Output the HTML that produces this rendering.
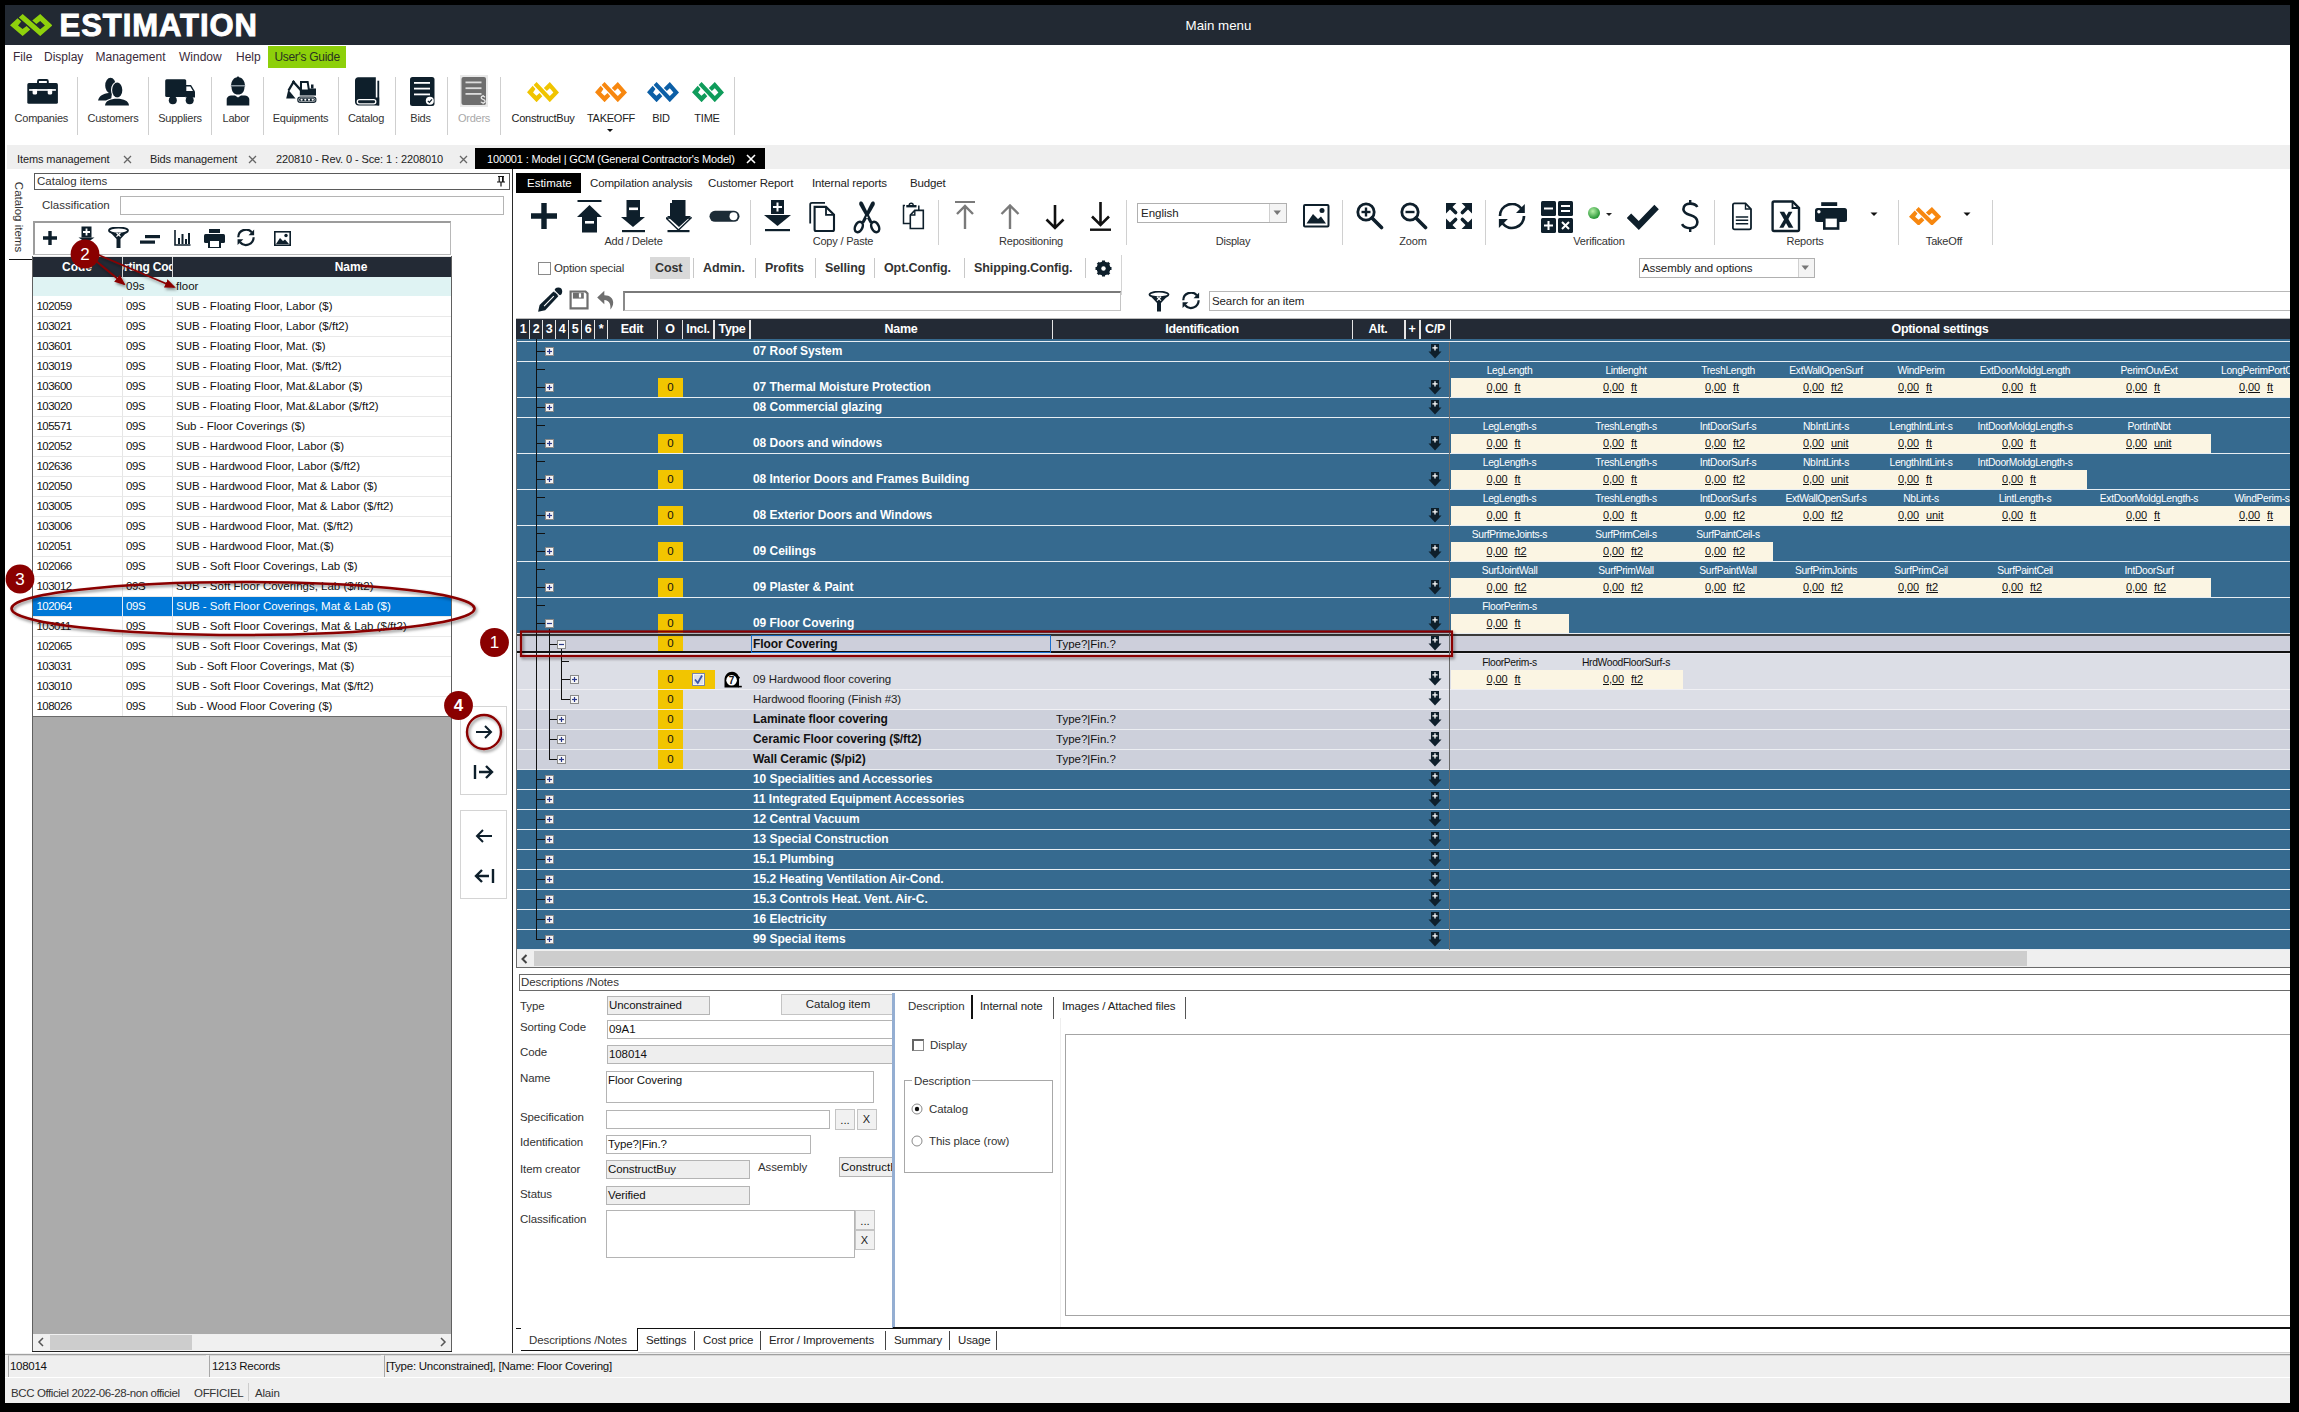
<!DOCTYPE html><html><head><meta charset="utf-8"><style>
html,body{margin:0;padding:0;}
body{width:2299px;height:1412px;background:#000;position:relative;overflow:hidden;font-family:"Liberation Sans", sans-serif;}
body div, body svg{position:absolute;box-sizing:border-box;white-space:nowrap;}
</style></head><body><div style="left:5px;top:5px;width:2285px;height:1398px;background:#fff;"></div>
<div style="left:5px;top:5px;width:2285px;height:40px;background:#222933;"></div>
<svg style="left:9.73px;top:13.96px;" width="42.42" height="22.06" viewBox="0 0 42.42 22.06"><g transform="scale(1.0000,1.0000)"><path d="M0,11.31 L7.58,4.18 L11.2,7.58 L8.03,11.42 L12.56,15.04 L16.63,12.1 L20.25,15.5 L12.67,22.06 Z" fill="#8fd10c"/><path d="M12.67,0 L8.83,3.39 L30.21,22.06 L42.42,11.42 L30.21,0 L22.29,6.56 L26.36,9.95 L30.21,6.9 L34.96,11.42 L30.21,15.27 Z" fill="#8fd10c"/></g></svg>
<div style="left:59.5px;top:8.8px;height:34px;line-height:34px;font-size:31px;color:#fff;font-weight:bold;letter-spacing:0.95px;-webkit-text-stroke:0.9px #fff;">ESTIMATION</div>
<div style="left:1118.5px;top:16.5px;height:17px;line-height:17px;font-size:13.3px;color:#fff;width:200px;text-align:center;">Main menu</div>
<div style="left:268px;top:46px;width:78px;height:22px;background:#8dd00a;"></div>
<div style="left:13px;top:49.0px;height:16px;line-height:16px;font-size:12px;color:#3a2a3a;letter-spacing:0px;">File</div>
<div style="left:44px;top:49.0px;height:16px;line-height:16px;font-size:12px;color:#3a2a3a;letter-spacing:0px;">Display</div>
<div style="left:95.5px;top:49.0px;height:16px;line-height:16px;font-size:12px;color:#3a2a3a;letter-spacing:0px;">Management</div>
<div style="left:179px;top:49.0px;height:16px;line-height:16px;font-size:12px;color:#3a2a3a;letter-spacing:0px;">Window</div>
<div style="left:236px;top:49.0px;height:16px;line-height:16px;font-size:12px;color:#3a2a3a;letter-spacing:0px;">Help</div>
<div style="left:274.4px;top:49.0px;height:16px;line-height:16px;font-size:12px;color:#2a3320;letter-spacing:-0.3px;">User&#x27;s Guide</div>
<div style="left:77px;top:77px;width:1px;height:58px;background:#cfcfcf;"></div>
<div style="left:148px;top:77px;width:1px;height:58px;background:#cfcfcf;"></div>
<div style="left:211px;top:77px;width:1px;height:58px;background:#cfcfcf;"></div>
<div style="left:263px;top:77px;width:1px;height:58px;background:#cfcfcf;"></div>
<div style="left:338px;top:77px;width:1px;height:58px;background:#cfcfcf;"></div>
<div style="left:395px;top:77px;width:1px;height:58px;background:#cfcfcf;"></div>
<div style="left:447px;top:77px;width:1px;height:58px;background:#cfcfcf;"></div>
<div style="left:500px;top:77px;width:1px;height:58px;background:#cfcfcf;"></div>
<div style="left:734px;top:77px;width:1px;height:58px;background:#cfcfcf;"></div>
<svg style="left:27px;top:76px;" width="32" height="30" viewBox="0 0 32 30"><rect x="11" y="4" width="9.8" height="5" rx="1.2" fill="none" stroke="#0e1f2b" stroke-width="1.9"/>
<rect x="0.3" y="7.1" width="30.6" height="20.7" rx="1.6" fill="#0e1f2b"/>
<rect x="2.1" y="13.1" width="26.8" height="1.7" fill="#fff"/>
<path d="M5.6,13.1 L10.1,13.1 L10.1,17 C10.1,18 9.3,18.5 7.85,18.5 C6.4,18.5 5.6,18 5.6,17 Z M20.7,13.1 L25.2,13.1 L25.2,17 C25.2,18 24.4,18.5 22.95,18.5 C21.5,18.5 20.7,18 20.7,17 Z" fill="#fff"/></svg>
<svg style="left:97px;top:76px;" width="34" height="30" viewBox="0 0 34 30"><ellipse cx="13.5" cy="9.5" rx="5.3" ry="7.8" fill="#0e1f2b"/>
<path d="M1,24.5 C2,20 6,17.5 12,17 L15,17 L14,24.5 Z" fill="#0e1f2b"/>
<ellipse cx="20.2" cy="14" rx="6.2" ry="8.6" fill="#fff"/>
<ellipse cx="20.2" cy="14" rx="5.1" ry="7.6" fill="#0e1f2b"/>
<path d="M6.5,30 C7,24.5 12,21.8 20,21.8 C28,21.8 32.5,24.5 33,30 Z" fill="#fff"/>
<path d="M8,29.5 C8.5,25 13,22.8 20,22.8 C27,22.8 31.5,25 32,29.5 Z" fill="#0e1f2b"/></svg>
<svg style="left:164px;top:76px;" width="32" height="30" viewBox="0 0 32 30"><rect x="1.2" y="3.3" width="21" height="17.8" rx="1.5" fill="#0e1f2b"/>
<path d="M21.5,9 L27,9 L31,15.5 L31,21.6 L21.5,21.6 Z" fill="#0e1f2b"/>
<path d="M22.3,10.6 L26.3,10.6 L29,15 L22.3,15 Z" fill="#fff"/>
<circle cx="8.8" cy="24.2" r="4" fill="#0e1f2b"/><circle cx="25.7" cy="24.2" r="4" fill="#0e1f2b"/></svg>
<svg style="left:225px;top:76px;" width="26" height="30" viewBox="0 0 26 30"><path d="M6,10.5 C6,4.5 9,1.2 13,1.2 C17,1.2 20,4.5 20,10.5 Z" fill="#0e1f2b"/>
<rect x="11.8" y="0.5" width="2.4" height="4" rx="1" fill="#0e1f2b"/>
<rect x="5.8" y="9" width="14.4" height="1.6" fill="#8d99a3"/>
<path d="M6.5,10.6 L19.5,10.6 C19.5,16 17,18.6 13,18.6 C9,18.6 6.5,16 6.5,10.6 Z" fill="#0e1f2b"/>
<path d="M1.7,29.5 L1.7,23.5 C1.7,21 4,19.5 7,19.5 L10,19.5 L13,21.5 L16,19.5 L19,19.5 C22,19.5 24.3,21 24.3,23.5 L24.3,29.5 Z" fill="#0e1f2b"/></svg>
<svg style="left:285px;top:76px;" width="34" height="30" viewBox="0 0 34 30"><path d="M1.2,22.6 L3.3,13.7 L10.6,22.6 Z" fill="#0e1f2b"/>
<path d="M3.5,14.5 L8.5,6 L17,15.5" fill="none" stroke="#0e1f2b" stroke-width="2.3"/>
<circle cx="8.5" cy="6" r="1.5" fill="#0e1f2b"/>
<path d="M15,5 L23.5,5 L24.7,12.5 L31,12.5 L31,19.5 L14.8,19.5 Z" fill="#0e1f2b"/>
<path d="M17,7 L21.8,7 L22.8,13.5 L17,13.5 Z" fill="#fff"/>
<rect x="26" y="8.5" width="2.5" height="4" fill="#0e1f2b"/>
<rect x="12.2" y="20.5" width="19.3" height="6.5" rx="3.2" fill="#0e1f2b"/>
<rect x="13.6" y="21.9" width="16.5" height="3.7" rx="1.8" fill="none" stroke="#fff" stroke-width="0.6"/>
<circle cx="16.6" cy="23.75" r="1.1" fill="#fff"/><circle cx="20.3" cy="23.75" r="1.1" fill="#fff"/><circle cx="24" cy="23.75" r="1.1" fill="#fff"/><circle cx="27.7" cy="23.75" r="1.1" fill="#fff"/></svg>
<svg style="left:353px;top:76px;" width="28" height="31" viewBox="0 0 28 31"><path d="M2,4.5 C2,2.5 3.3,1.2 5.2,1.2 L22.8,1.2 L22.8,23 L2,23 Z" fill="#0e1f2b"/>
<rect x="24.4" y="4.7" width="1.8" height="24.7" fill="#0e1f2b"/>
<path d="M2,21.5 L2,26 C2,28 3.5,29.4 5.5,29.4 L26.2,29.4 L26.2,21.5 Z" fill="#0e1f2b"/>
<rect x="4.3" y="23.6" width="18.5" height="4.2" rx="2.1" fill="none" stroke="#fff" stroke-width="1.3"/></svg>
<svg style="left:409px;top:76px;" width="27" height="31" viewBox="0 0 27 31"><rect x="1" y="1" width="24.5" height="29" rx="2.5" fill="#0e1f2b"/>
<rect x="5" y="6" width="16" height="1.8" fill="#fff"/><rect x="5" y="11.7" width="16" height="1.8" fill="#fff"/><rect x="5" y="17.5" width="16" height="1.8" fill="#fff"/>
<circle cx="20.8" cy="24.8" r="4" fill="#fff"/><path d="M18.8,24.9 L20.4,26.4 L23,23.4" stroke="#0e1f2b" stroke-width="1.3" fill="none"/></svg>
<svg style="left:460px;top:75px;" width="28" height="32" viewBox="0 0 28 32"><rect x="0" y="0" width="28" height="32" fill="#e9e9e9"/>
<rect x="1.5" y="2" width="24.5" height="28" rx="2" fill="#6e6e6e"/>
<rect x="5.5" y="6.5" width="16" height="1.8" fill="#dcdcdc"/><rect x="5.5" y="12.3" width="16" height="1.8" fill="#dcdcdc"/><rect x="5.5" y="18" width="16" height="1.8" fill="#dcdcdc"/>
<path d="M25,22.4 C24.6,21.6 23.8,21.2 23,21.2 C21.9,21.2 21.2,21.8 21.2,22.7 C21.2,23.7 22.1,24 23,24.3 C24,24.6 25.1,25 25.1,26.2 C25.1,27.2 24.3,27.8 23.1,27.8 C22.1,27.8 21.3,27.4 20.9,26.7 M23.1,20 L23.1,21.2 M23.1,27.8 L23.1,29.2" fill="none" stroke="#e6e6e6" stroke-width="1.3"/></svg>
<svg style="left:527px;top:81.8px;" width="32" height="20.2" viewBox="0 0 32 20.2"><g transform="scale(0.7544,0.9157)"><path d="M0,11.31 L7.58,4.18 L11.2,7.58 L8.03,11.42 L12.56,15.04 L16.63,12.1 L20.25,15.5 L12.67,22.06 Z" fill="#f0c400"/><path d="M12.67,0 L8.83,3.39 L30.21,22.06 L42.42,11.42 L30.21,0 L22.29,6.56 L26.36,9.95 L30.21,6.9 L34.96,11.42 L30.21,15.27 Z" fill="#f0c400"/></g></svg>
<svg style="left:595px;top:81.8px;" width="32" height="20.2" viewBox="0 0 32 20.2"><g transform="scale(0.7544,0.9157)"><path d="M0,11.31 L7.58,4.18 L11.2,7.58 L8.03,11.42 L12.56,15.04 L16.63,12.1 L20.25,15.5 L12.67,22.06 Z" fill="#f7870f"/><path d="M12.67,0 L8.83,3.39 L30.21,22.06 L42.42,11.42 L30.21,0 L22.29,6.56 L26.36,9.95 L30.21,6.9 L34.96,11.42 L30.21,15.27 Z" fill="#f7870f"/></g></svg>
<svg style="left:647px;top:81.8px;" width="32" height="20.2" viewBox="0 0 32 20.2"><g transform="scale(0.7544,0.9157)"><path d="M0,11.31 L7.58,4.18 L11.2,7.58 L8.03,11.42 L12.56,15.04 L16.63,12.1 L20.25,15.5 L12.67,22.06 Z" fill="#0c5fa6"/><path d="M12.67,0 L8.83,3.39 L30.21,22.06 L42.42,11.42 L30.21,0 L22.29,6.56 L26.36,9.95 L30.21,6.9 L34.96,11.42 L30.21,15.27 Z" fill="#0c5fa6"/></g></svg>
<svg style="left:692px;top:81.8px;" width="32" height="20.2" viewBox="0 0 32 20.2"><g transform="scale(0.7544,0.9157)"><path d="M0,11.31 L7.58,4.18 L11.2,7.58 L8.03,11.42 L12.56,15.04 L16.63,12.1 L20.25,15.5 L12.67,22.06 Z" fill="#0f9c5b"/><path d="M12.67,0 L8.83,3.39 L30.21,22.06 L42.42,11.42 L30.21,0 L22.29,6.56 L26.36,9.95 L30.21,6.9 L34.96,11.42 L30.21,15.27 Z" fill="#0f9c5b"/></g></svg>
<div style="left:-18.700000000000003px;top:111.0px;height:14px;line-height:14px;font-size:11px;color:#333;width:120px;text-align:center;letter-spacing:-0.25px;">Companies</div>
<div style="left:53.0px;top:111.0px;height:14px;line-height:14px;font-size:11px;color:#333;width:120px;text-align:center;letter-spacing:-0.25px;">Customers</div>
<div style="left:120.0px;top:111.0px;height:14px;line-height:14px;font-size:11px;color:#333;width:120px;text-align:center;letter-spacing:-0.25px;">Suppliers</div>
<div style="left:176.0px;top:111.0px;height:14px;line-height:14px;font-size:11px;color:#333;width:120px;text-align:center;letter-spacing:-0.25px;">Labor</div>
<div style="left:240.5px;top:111.0px;height:14px;line-height:14px;font-size:11px;color:#333;width:120px;text-align:center;letter-spacing:-0.25px;">Equipments</div>
<div style="left:306.0px;top:111.0px;height:14px;line-height:14px;font-size:11px;color:#333;width:120px;text-align:center;letter-spacing:-0.25px;">Catalog</div>
<div style="left:360.5px;top:111.0px;height:14px;line-height:14px;font-size:11px;color:#333;width:120px;text-align:center;letter-spacing:-0.25px;">Bids</div>
<div style="left:414.0px;top:111.0px;height:14px;line-height:14px;font-size:11px;color:#a9a9a9;width:120px;text-align:center;letter-spacing:-0.25px;">Orders</div>
<div style="left:483.0px;top:111.0px;height:14px;line-height:14px;font-size:11px;color:#222;width:120px;text-align:center;letter-spacing:-0.25px;">ConstructBuy</div>
<div style="left:551.0px;top:111.0px;height:14px;line-height:14px;font-size:11px;color:#222;width:120px;text-align:center;letter-spacing:-0.25px;">TAKEOFF</div>
<div style="left:601.0px;top:111.0px;height:14px;line-height:14px;font-size:11px;color:#222;width:120px;text-align:center;letter-spacing:-0.25px;">BID</div>
<div style="left:647.0px;top:111.0px;height:14px;line-height:14px;font-size:11px;color:#222;width:120px;text-align:center;letter-spacing:-0.25px;">TIME</div>
<svg style="left:606px;top:128px;" width="8" height="5" viewBox="0 0 8 5"><path d="M1,1 L7,1 L4,4 Z" fill="#111"/></svg>
<div style="left:7px;top:145px;width:2283px;height:24px;background:#efefef;"></div>
<div style="left:475px;top:148px;width:290px;height:21px;background:#000;"></div>
<div style="left:17px;top:152.0px;height:14px;line-height:14px;font-size:11px;color:#222;letter-spacing:-0.1px;">Items management</div>
<svg style="left:122.5px;top:154.5px;" width="9" height="9" viewBox="0 0 9 9"><path d="M1,1 L8,8 M8,1 L1,8" stroke="#666" stroke-width="1.3"/></svg>
<div style="left:150px;top:152.0px;height:14px;line-height:14px;font-size:11px;color:#222;letter-spacing:-0.1px;">Bids management</div>
<svg style="left:247.5px;top:154.5px;" width="9" height="9" viewBox="0 0 9 9"><path d="M1,1 L8,8 M8,1 L1,8" stroke="#666" stroke-width="1.3"/></svg>
<div style="left:276px;top:152.0px;height:14px;line-height:14px;font-size:11px;color:#222;letter-spacing:-0.1px;">220810 - Rev. 0 - Sce: 1 : 2208010</div>
<svg style="left:458.5px;top:154.5px;" width="9" height="9" viewBox="0 0 9 9"><path d="M1,1 L8,8 M8,1 L1,8" stroke="#666" stroke-width="1.3"/></svg>
<div style="left:487px;top:152.0px;height:14px;line-height:14px;font-size:11px;color:#fff;letter-spacing:-0.15px;">100001 : Model | GCM (General Contractor&#x27;s Model)</div>
<svg style="left:746px;top:154px;" width="10" height="10" viewBox="0 0 10 10"><path d="M1,1 L9,9 M9,1 L1,9" stroke="#fff" stroke-width="1.6"/></svg>
<div style="left:512px;top:169px;width:1px;height:1184px;background:#2a2a2a;"></div>
<div style="left:5px;top:175px;width:27px;height:84px;"></div>
<div style="left:6px;top:211px;width:84px;height:20px;transform:rotate(90deg);transform-origin:center;font-size:11.5px;line-height:20px;color:#333;text-align:center;left:-23px;top:207px;">Catalog items</div>
<div style="left:9px;top:259px;width:24px;height:1px;background:#111;"></div>
<div style="left:34px;top:173px;width:476px;height:17px;border:1px solid #5a5a5a;background:#fff;"></div>
<div style="left:37px;top:174.0px;height:15px;line-height:15px;font-size:11.5px;color:#333;">Catalog items</div>
<svg style="left:496px;top:175px;" width="10" height="12" viewBox="0 0 10 12"><path d="M2,1.5 L8,1.5 M3.2,1.5 L3.2,7 M6.8,1.5 L6.8,7 M1,7 L9,7 M5,7 L5,11.5" stroke="#111" stroke-width="1.2" fill="none"/><rect x="6" y="2" width="1.6" height="5" fill="#111"/></svg>
<div style="left:42px;top:197.5px;height:15px;line-height:15px;font-size:11.5px;color:#333;">Classification</div>
<div style="left:120px;top:196px;width:384px;height:19px;border:1px solid #b4b4b4;background:#fff;"></div>
<div style="left:33px;top:221px;width:418px;height:34px;border:1px solid #b8b8b8;border-top:2px solid #9c9c9c;border-left:2px solid #9c9c9c;background:#fff;"></div>
<svg style="left:42px;top:230px;" width="16" height="16" viewBox="0 0 16 16"><path d="M8,1 L8,15 M1,8 L15,8" stroke="#0e1f2b" stroke-width="3.4"/></svg>
<svg style="left:78px;top:226px;" width="17" height="18" viewBox="0 0 17 18"><rect x="3.5" y="0.5" width="10" height="11" fill="#0e1f2b"/><path d="M8.5,2.5 L8.5,9.5 M5,6 L12,6" stroke="#fff" stroke-width="1.8"/><path d="M0.5,11.5 L16.5,11.5 L8.5,17 Z" fill="#0e1f2b"/></svg>
<svg style="left:108px;top:227px;" width="21" height="22" viewBox="0 0 21 22"><ellipse cx="10.5" cy="3.5" rx="9.5" ry="3" fill="none" stroke="#0e1f2b" stroke-width="1.8"/><path d="M1,4 L8.5,12 L8.5,21 L12.5,21 L12.5,12 L20,4 C17,7 4,7 1,4 Z" fill="#0e1f2b"/><path d="M8.5,5.8 L12.5,9.6 M12.5,5.8 L8.5,9.6" stroke="#fff" stroke-width="1.2"/></svg>
<svg style="left:140px;top:235px;" width="20" height="9" viewBox="0 0 20 9"><rect x="5" y="0" width="15" height="3.2" fill="#0e1f2b"/><rect x="0" y="5.5" width="15" height="3.2" fill="#0e1f2b"/></svg>
<svg style="left:174px;top:230px;" width="17" height="16" viewBox="0 0 17 16"><path d="M1,0 L1,15 L16.5,15" stroke="#0e1f2b" stroke-width="1.6" fill="none"/><rect x="4" y="8" width="2" height="6" fill="#0e1f2b"/><rect x="7.5" y="4" width="2" height="10" fill="#0e1f2b"/><rect x="11" y="9" width="2" height="5" fill="#0e1f2b"/><rect x="14" y="3" width="2" height="11" fill="#0e1f2b"/></svg>
<svg style="left:204px;top:229px;" width="21" height="19" viewBox="0 0 21 19"><rect x="5" y="0" width="11" height="4" fill="#0e1f2b"/><rect x="0" y="5" width="21" height="9" rx="1.5" fill="#0e1f2b"/><rect x="5" y="11" width="11" height="8" fill="#fff" stroke="#0e1f2b" stroke-width="2"/></svg>
<svg style="left:237px;top:229px;" width="18" height="18" viewBox="0 0 18 18"><g transform="scale(0.64)"><path d="M2,13 A12,12 0 0 1 23.2,5.3" fill="none" stroke="#0e1f2b" stroke-width="3.4"/><path d="M26.8,0.9 L26.8,9.9 L18,9.9 Z" fill="#0e1f2b"/><path d="M26,13 A12,12 0 0 1 4.8,20.7" fill="none" stroke="#0e1f2b" stroke-width="3.4"/><path d="M0.9,16 L9.9,16 L0.9,25 Z" fill="#0e1f2b"/></g></svg>
<svg style="left:274px;top:231px;" width="17" height="15" viewBox="0 0 17 15"><rect x="0.8" y="0.8" width="15.4" height="13.4" fill="none" stroke="#0e1f2b" stroke-width="1.6"/><path d="M2,13 L6,7 L9,10 L11,8.5 L15,13 Z" fill="#0e1f2b"/><circle cx="12" cy="4.5" r="1.7" fill="#0e1f2b"/></svg>
<div style="left:33px;top:256px;width:418px;height:1px;background:#e8e8e8;"></div>
<div style="left:33px;top:257px;width:418px;height:20px;background:#232a35;"></div>
<div style="left:122px;top:257px;width:1px;height:20px;background:#d8d8d8;"></div>
<div style="left:172px;top:257px;width:1px;height:20px;background:#d8d8d8;"></div>
<div style="left:37.0px;top:259.0px;height:16px;line-height:16px;font-size:12px;color:#fff;font-weight:bold;width:80px;text-align:center;">Code</div>
<div style="left:123px;top:259px;width:49px;height:16px;overflow:hidden;"><div style="left:-14px;top:0;line-height:16px;font-size:12px;font-weight:bold;color:#fff;letter-spacing:-0.2px;">Sorting Code</div></div>
<div style="left:301.0px;top:259.0px;height:16px;line-height:16px;font-size:12px;color:#fff;font-weight:bold;width:100px;text-align:center;">Name</div>
<div style="left:33px;top:277px;width:418px;height:19px;background:#dff3f3;"></div>
<div style="left:126px;top:278.5px;height:15px;line-height:15px;font-size:11.5px;color:#111;">09s</div>
<div style="left:176px;top:278.5px;height:15px;line-height:15px;font-size:11.5px;color:#111;">floor</div>
<div style="left:33px;top:316px;width:418px;height:1px;background:#e9e9e9;"></div>
<div style="left:122px;top:297px;width:1px;height:19px;background:#e6e6e6;"></div>
<div style="left:172px;top:297px;width:1px;height:19px;background:#e6e6e6;"></div>
<div style="left:36.5px;top:298.8px;height:15px;line-height:15px;font-size:11.5px;color:#111;letter-spacing:-0.55px;">102059</div>
<div style="left:126px;top:298.8px;height:15px;line-height:15px;font-size:11.5px;color:#111;letter-spacing:-0.4px;">09S</div>
<div style="left:176px;top:298.8px;height:15px;line-height:15px;font-size:11.5px;color:#111;letter-spacing:0px;">SUB - Floating Floor, Labor ($)</div>
<div style="left:33px;top:336px;width:418px;height:1px;background:#e9e9e9;"></div>
<div style="left:122px;top:317px;width:1px;height:19px;background:#e6e6e6;"></div>
<div style="left:172px;top:317px;width:1px;height:19px;background:#e6e6e6;"></div>
<div style="left:36.5px;top:318.8px;height:15px;line-height:15px;font-size:11.5px;color:#111;letter-spacing:-0.55px;">103021</div>
<div style="left:126px;top:318.8px;height:15px;line-height:15px;font-size:11.5px;color:#111;letter-spacing:-0.4px;">09S</div>
<div style="left:176px;top:318.8px;height:15px;line-height:15px;font-size:11.5px;color:#111;letter-spacing:0px;">SUB - Floating Floor, Labor ($/ft2)</div>
<div style="left:33px;top:356px;width:418px;height:1px;background:#e9e9e9;"></div>
<div style="left:122px;top:337px;width:1px;height:19px;background:#e6e6e6;"></div>
<div style="left:172px;top:337px;width:1px;height:19px;background:#e6e6e6;"></div>
<div style="left:36.5px;top:338.8px;height:15px;line-height:15px;font-size:11.5px;color:#111;letter-spacing:-0.55px;">103601</div>
<div style="left:126px;top:338.8px;height:15px;line-height:15px;font-size:11.5px;color:#111;letter-spacing:-0.4px;">09S</div>
<div style="left:176px;top:338.8px;height:15px;line-height:15px;font-size:11.5px;color:#111;letter-spacing:0px;">SUB - Floating Floor, Mat. ($)</div>
<div style="left:33px;top:376px;width:418px;height:1px;background:#e9e9e9;"></div>
<div style="left:122px;top:357px;width:1px;height:19px;background:#e6e6e6;"></div>
<div style="left:172px;top:357px;width:1px;height:19px;background:#e6e6e6;"></div>
<div style="left:36.5px;top:358.8px;height:15px;line-height:15px;font-size:11.5px;color:#111;letter-spacing:-0.55px;">103019</div>
<div style="left:126px;top:358.8px;height:15px;line-height:15px;font-size:11.5px;color:#111;letter-spacing:-0.4px;">09S</div>
<div style="left:176px;top:358.8px;height:15px;line-height:15px;font-size:11.5px;color:#111;letter-spacing:0px;">SUB - Floating Floor, Mat. ($/ft2)</div>
<div style="left:33px;top:396px;width:418px;height:1px;background:#e9e9e9;"></div>
<div style="left:122px;top:377px;width:1px;height:19px;background:#e6e6e6;"></div>
<div style="left:172px;top:377px;width:1px;height:19px;background:#e6e6e6;"></div>
<div style="left:36.5px;top:378.8px;height:15px;line-height:15px;font-size:11.5px;color:#111;letter-spacing:-0.55px;">103600</div>
<div style="left:126px;top:378.8px;height:15px;line-height:15px;font-size:11.5px;color:#111;letter-spacing:-0.4px;">09S</div>
<div style="left:176px;top:378.8px;height:15px;line-height:15px;font-size:11.5px;color:#111;letter-spacing:0px;">SUB - Floating Floor, Mat.&amp;Labor ($)</div>
<div style="left:33px;top:416px;width:418px;height:1px;background:#e9e9e9;"></div>
<div style="left:122px;top:397px;width:1px;height:19px;background:#e6e6e6;"></div>
<div style="left:172px;top:397px;width:1px;height:19px;background:#e6e6e6;"></div>
<div style="left:36.5px;top:398.8px;height:15px;line-height:15px;font-size:11.5px;color:#111;letter-spacing:-0.55px;">103020</div>
<div style="left:126px;top:398.8px;height:15px;line-height:15px;font-size:11.5px;color:#111;letter-spacing:-0.4px;">09S</div>
<div style="left:176px;top:398.8px;height:15px;line-height:15px;font-size:11.5px;color:#111;letter-spacing:0px;">SUB - Floating Floor, Mat.&amp;Labor ($/ft2)</div>
<div style="left:33px;top:436px;width:418px;height:1px;background:#e9e9e9;"></div>
<div style="left:122px;top:417px;width:1px;height:19px;background:#e6e6e6;"></div>
<div style="left:172px;top:417px;width:1px;height:19px;background:#e6e6e6;"></div>
<div style="left:36.5px;top:418.8px;height:15px;line-height:15px;font-size:11.5px;color:#111;letter-spacing:-0.55px;">105571</div>
<div style="left:126px;top:418.8px;height:15px;line-height:15px;font-size:11.5px;color:#111;letter-spacing:-0.4px;">09S</div>
<div style="left:176px;top:418.8px;height:15px;line-height:15px;font-size:11.5px;color:#111;letter-spacing:0px;">Sub - Floor Coverings ($)</div>
<div style="left:33px;top:456px;width:418px;height:1px;background:#e9e9e9;"></div>
<div style="left:122px;top:437px;width:1px;height:19px;background:#e6e6e6;"></div>
<div style="left:172px;top:437px;width:1px;height:19px;background:#e6e6e6;"></div>
<div style="left:36.5px;top:438.8px;height:15px;line-height:15px;font-size:11.5px;color:#111;letter-spacing:-0.55px;">102052</div>
<div style="left:126px;top:438.8px;height:15px;line-height:15px;font-size:11.5px;color:#111;letter-spacing:-0.4px;">09S</div>
<div style="left:176px;top:438.8px;height:15px;line-height:15px;font-size:11.5px;color:#111;letter-spacing:0px;">SUB - Hardwood Floor, Labor ($)</div>
<div style="left:33px;top:476px;width:418px;height:1px;background:#e9e9e9;"></div>
<div style="left:122px;top:457px;width:1px;height:19px;background:#e6e6e6;"></div>
<div style="left:172px;top:457px;width:1px;height:19px;background:#e6e6e6;"></div>
<div style="left:36.5px;top:458.8px;height:15px;line-height:15px;font-size:11.5px;color:#111;letter-spacing:-0.55px;">102636</div>
<div style="left:126px;top:458.8px;height:15px;line-height:15px;font-size:11.5px;color:#111;letter-spacing:-0.4px;">09S</div>
<div style="left:176px;top:458.8px;height:15px;line-height:15px;font-size:11.5px;color:#111;letter-spacing:0px;">SUB - Hardwood Floor, Labor ($/ft2)</div>
<div style="left:33px;top:496px;width:418px;height:1px;background:#e9e9e9;"></div>
<div style="left:122px;top:477px;width:1px;height:19px;background:#e6e6e6;"></div>
<div style="left:172px;top:477px;width:1px;height:19px;background:#e6e6e6;"></div>
<div style="left:36.5px;top:478.8px;height:15px;line-height:15px;font-size:11.5px;color:#111;letter-spacing:-0.55px;">102050</div>
<div style="left:126px;top:478.8px;height:15px;line-height:15px;font-size:11.5px;color:#111;letter-spacing:-0.4px;">09S</div>
<div style="left:176px;top:478.8px;height:15px;line-height:15px;font-size:11.5px;color:#111;letter-spacing:0px;">SUB - Hardwood Floor, Mat &amp; Labor ($)</div>
<div style="left:33px;top:516px;width:418px;height:1px;background:#e9e9e9;"></div>
<div style="left:122px;top:497px;width:1px;height:19px;background:#e6e6e6;"></div>
<div style="left:172px;top:497px;width:1px;height:19px;background:#e6e6e6;"></div>
<div style="left:36.5px;top:498.8px;height:15px;line-height:15px;font-size:11.5px;color:#111;letter-spacing:-0.55px;">103005</div>
<div style="left:126px;top:498.8px;height:15px;line-height:15px;font-size:11.5px;color:#111;letter-spacing:-0.4px;">09S</div>
<div style="left:176px;top:498.8px;height:15px;line-height:15px;font-size:11.5px;color:#111;letter-spacing:0px;">SUB - Hardwood Floor, Mat &amp; Labor ($/ft2)</div>
<div style="left:33px;top:536px;width:418px;height:1px;background:#e9e9e9;"></div>
<div style="left:122px;top:517px;width:1px;height:19px;background:#e6e6e6;"></div>
<div style="left:172px;top:517px;width:1px;height:19px;background:#e6e6e6;"></div>
<div style="left:36.5px;top:518.8px;height:15px;line-height:15px;font-size:11.5px;color:#111;letter-spacing:-0.55px;">103006</div>
<div style="left:126px;top:518.8px;height:15px;line-height:15px;font-size:11.5px;color:#111;letter-spacing:-0.4px;">09S</div>
<div style="left:176px;top:518.8px;height:15px;line-height:15px;font-size:11.5px;color:#111;letter-spacing:0px;">SUB - Hardwood Floor, Mat. ($/ft2)</div>
<div style="left:33px;top:556px;width:418px;height:1px;background:#e9e9e9;"></div>
<div style="left:122px;top:537px;width:1px;height:19px;background:#e6e6e6;"></div>
<div style="left:172px;top:537px;width:1px;height:19px;background:#e6e6e6;"></div>
<div style="left:36.5px;top:538.8px;height:15px;line-height:15px;font-size:11.5px;color:#111;letter-spacing:-0.55px;">102051</div>
<div style="left:126px;top:538.8px;height:15px;line-height:15px;font-size:11.5px;color:#111;letter-spacing:-0.4px;">09S</div>
<div style="left:176px;top:538.8px;height:15px;line-height:15px;font-size:11.5px;color:#111;letter-spacing:0px;">SUB - Hardwood Floor, Mat.($)</div>
<div style="left:33px;top:576px;width:418px;height:1px;background:#e9e9e9;"></div>
<div style="left:122px;top:557px;width:1px;height:19px;background:#e6e6e6;"></div>
<div style="left:172px;top:557px;width:1px;height:19px;background:#e6e6e6;"></div>
<div style="left:36.5px;top:558.8px;height:15px;line-height:15px;font-size:11.5px;color:#111;letter-spacing:-0.55px;">102066</div>
<div style="left:126px;top:558.8px;height:15px;line-height:15px;font-size:11.5px;color:#111;letter-spacing:-0.4px;">09S</div>
<div style="left:176px;top:558.8px;height:15px;line-height:15px;font-size:11.5px;color:#111;letter-spacing:0px;">SUB - Soft Floor Coverings, Lab ($)</div>
<div style="left:33px;top:596px;width:418px;height:1px;background:#e9e9e9;"></div>
<div style="left:122px;top:577px;width:1px;height:19px;background:#e6e6e6;"></div>
<div style="left:172px;top:577px;width:1px;height:19px;background:#e6e6e6;"></div>
<div style="left:36.5px;top:578.8px;height:15px;line-height:15px;font-size:11.5px;color:#111;letter-spacing:-0.55px;">103012</div>
<div style="left:126px;top:578.8px;height:15px;line-height:15px;font-size:11.5px;color:#111;letter-spacing:-0.4px;">09S</div>
<div style="left:176px;top:578.8px;height:15px;line-height:15px;font-size:11.5px;color:#111;letter-spacing:0px;">SUB - Soft Floor Coverings, Lab ($/ft2)</div>
<div style="left:33px;top:597px;width:418px;height:19px;background:#0078d7;"></div>
<div style="left:33px;top:616px;width:418px;height:1px;background:#e9e9e9;"></div>
<div style="left:122px;top:597px;width:1px;height:19px;background:#e0ecf8;"></div>
<div style="left:172px;top:597px;width:1px;height:19px;background:#e0ecf8;"></div>
<div style="left:36.5px;top:598.8px;height:15px;line-height:15px;font-size:11.5px;color:#fff;letter-spacing:-0.55px;">102064</div>
<div style="left:126px;top:598.8px;height:15px;line-height:15px;font-size:11.5px;color:#fff;letter-spacing:-0.4px;">09S</div>
<div style="left:176px;top:598.8px;height:15px;line-height:15px;font-size:11.5px;color:#fff;letter-spacing:0px;">SUB - Soft Floor Coverings, Mat &amp; Lab ($)</div>
<div style="left:33px;top:636px;width:418px;height:1px;background:#e9e9e9;"></div>
<div style="left:122px;top:617px;width:1px;height:19px;background:#e6e6e6;"></div>
<div style="left:172px;top:617px;width:1px;height:19px;background:#e6e6e6;"></div>
<div style="left:36.5px;top:618.8px;height:15px;line-height:15px;font-size:11.5px;color:#111;letter-spacing:-0.55px;">103011</div>
<div style="left:126px;top:618.8px;height:15px;line-height:15px;font-size:11.5px;color:#111;letter-spacing:-0.4px;">09S</div>
<div style="left:176px;top:618.8px;height:15px;line-height:15px;font-size:11.5px;color:#111;letter-spacing:0px;">SUB - Soft Floor Coverings, Mat &amp; Lab ($/ft2)</div>
<div style="left:33px;top:656px;width:418px;height:1px;background:#e9e9e9;"></div>
<div style="left:122px;top:637px;width:1px;height:19px;background:#e6e6e6;"></div>
<div style="left:172px;top:637px;width:1px;height:19px;background:#e6e6e6;"></div>
<div style="left:36.5px;top:638.8px;height:15px;line-height:15px;font-size:11.5px;color:#111;letter-spacing:-0.55px;">102065</div>
<div style="left:126px;top:638.8px;height:15px;line-height:15px;font-size:11.5px;color:#111;letter-spacing:-0.4px;">09S</div>
<div style="left:176px;top:638.8px;height:15px;line-height:15px;font-size:11.5px;color:#111;letter-spacing:0px;">SUB - Soft Floor Coverings, Mat ($)</div>
<div style="left:33px;top:676px;width:418px;height:1px;background:#e9e9e9;"></div>
<div style="left:122px;top:657px;width:1px;height:19px;background:#e6e6e6;"></div>
<div style="left:172px;top:657px;width:1px;height:19px;background:#e6e6e6;"></div>
<div style="left:36.5px;top:658.8px;height:15px;line-height:15px;font-size:11.5px;color:#111;letter-spacing:-0.55px;">103031</div>
<div style="left:126px;top:658.8px;height:15px;line-height:15px;font-size:11.5px;color:#111;letter-spacing:-0.4px;">09S</div>
<div style="left:176px;top:658.8px;height:15px;line-height:15px;font-size:11.5px;color:#111;letter-spacing:0px;">Sub - Soft Floor Coverings, Mat ($)</div>
<div style="left:33px;top:696px;width:418px;height:1px;background:#e9e9e9;"></div>
<div style="left:122px;top:677px;width:1px;height:19px;background:#e6e6e6;"></div>
<div style="left:172px;top:677px;width:1px;height:19px;background:#e6e6e6;"></div>
<div style="left:36.5px;top:678.8px;height:15px;line-height:15px;font-size:11.5px;color:#111;letter-spacing:-0.55px;">103010</div>
<div style="left:126px;top:678.8px;height:15px;line-height:15px;font-size:11.5px;color:#111;letter-spacing:-0.4px;">09S</div>
<div style="left:176px;top:678.8px;height:15px;line-height:15px;font-size:11.5px;color:#111;letter-spacing:0px;">SUB - Soft Floor Coverings, Mat ($/ft2)</div>
<div style="left:33px;top:716px;width:418px;height:1px;background:#e9e9e9;"></div>
<div style="left:122px;top:697px;width:1px;height:19px;background:#e6e6e6;"></div>
<div style="left:172px;top:697px;width:1px;height:19px;background:#e6e6e6;"></div>
<div style="left:36.5px;top:698.8px;height:15px;line-height:15px;font-size:11.5px;color:#111;letter-spacing:-0.55px;">108026</div>
<div style="left:126px;top:698.8px;height:15px;line-height:15px;font-size:11.5px;color:#111;letter-spacing:-0.4px;">09S</div>
<div style="left:176px;top:698.8px;height:15px;line-height:15px;font-size:11.5px;color:#111;letter-spacing:0px;">Sub - Wood Floor Covering ($)</div>
<div style="left:33px;top:716px;width:418px;height:1px;background:#6a6a6a;"></div>
<div style="left:33px;top:717px;width:418px;height:617px;background:#ababab;"></div>
<div style="left:32px;top:256px;width:1px;height:1096px;background:#606060;"></div>
<div style="left:451px;top:256px;width:1px;height:1096px;background:#606060;"></div>
<div style="left:33px;top:1334px;width:418px;height:17px;background:#f0f0f0;"></div>
<div style="left:50px;top:1335px;width:142px;height:15px;background:#cdcdcd;"></div>
<svg style="left:37px;top:1337px;" width="8" height="10" viewBox="0 0 8 10"><path d="M6,1 L2,5 L6,9" stroke="#555" stroke-width="1.5" fill="none"/></svg>
<svg style="left:439px;top:1337px;" width="8" height="10" viewBox="0 0 8 10"><path d="M2,1 L6,5 L2,9" stroke="#555" stroke-width="1.5" fill="none"/></svg>
<div style="left:32px;top:1351px;width:420px;height:1px;background:#222;"></div>
<div style="left:460px;top:706px;width:47px;height:89px;border:1px solid #d4d4d4;background:#fff;"></div>
<div style="left:460px;top:810px;width:47px;height:89px;border:1px solid #d4d4d4;background:#fff;"></div>
<svg style="left:474px;top:724px;" width="20" height="16" viewBox="0 0 20 16"><path d="M2,8 L17,8 M11,2 L17,8 L11,14" stroke="#0e1f2b" stroke-width="2" fill="none"/></svg>
<svg style="left:473px;top:763px;" width="22" height="18" viewBox="0 0 22 18"><path d="M2,2 L2,16 M6,9 L19,9 M13,3 L19,9 L13,15" stroke="#0e1f2b" stroke-width="2.4" fill="none"/></svg>
<svg style="left:474px;top:828px;" width="20" height="16" viewBox="0 0 20 16"><path d="M18,8 L3,8 M9,2 L3,8 L9,14" stroke="#0e1f2b" stroke-width="2" fill="none"/></svg>
<svg style="left:473px;top:867px;" width="22" height="18" viewBox="0 0 22 18"><path d="M20,2 L20,16 M16,9 L3,9 M9,3 L3,9 L9,15" stroke="#0e1f2b" stroke-width="2.4" fill="none"/></svg>
<div style="left:516px;top:173px;width:65px;height:20px;background:#000;"></div>
<div style="left:527px;top:175.5px;height:15px;line-height:15px;font-size:11.5px;color:#fff;">Estimate</div>
<div style="left:590px;top:175.5px;height:15px;line-height:15px;font-size:11.5px;color:#222;letter-spacing:-0.15px;">Compilation analysis</div>
<div style="left:708px;top:175.5px;height:15px;line-height:15px;font-size:11.5px;color:#222;letter-spacing:-0.15px;">Customer Report</div>
<div style="left:812px;top:175.5px;height:15px;line-height:15px;font-size:11.5px;color:#222;letter-spacing:-0.15px;">Internal reports</div>
<div style="left:910px;top:175.5px;height:15px;line-height:15px;font-size:11.5px;color:#222;letter-spacing:-0.15px;">Budget</div>
<div style="left:750px;top:200px;width:1px;height:45px;background:#d0d0d0;"></div>
<div style="left:938px;top:200px;width:1px;height:45px;background:#d0d0d0;"></div>
<div style="left:1126px;top:200px;width:1px;height:45px;background:#d0d0d0;"></div>
<div style="left:1342px;top:200px;width:1px;height:45px;background:#d0d0d0;"></div>
<div style="left:1485px;top:200px;width:1px;height:45px;background:#d0d0d0;"></div>
<div style="left:1714px;top:200px;width:1px;height:45px;background:#d0d0d0;"></div>
<div style="left:1898px;top:200px;width:1px;height:45px;background:#d0d0d0;"></div>
<div style="left:1992px;top:200px;width:1px;height:45px;background:#d0d0d0;"></div>
<div style="left:558.5px;top:233.5px;height:14px;line-height:14px;font-size:11px;color:#333;width:150px;text-align:center;letter-spacing:-0.2px;">Add / Delete</div>
<div style="left:768.0px;top:233.5px;height:14px;line-height:14px;font-size:11px;color:#333;width:150px;text-align:center;letter-spacing:-0.2px;">Copy / Paste</div>
<div style="left:956.0px;top:233.5px;height:14px;line-height:14px;font-size:11px;color:#333;width:150px;text-align:center;letter-spacing:-0.2px;">Repositioning</div>
<div style="left:1158.0px;top:233.5px;height:14px;line-height:14px;font-size:11px;color:#333;width:150px;text-align:center;letter-spacing:-0.2px;">Display</div>
<div style="left:1338.0px;top:233.5px;height:14px;line-height:14px;font-size:11px;color:#333;width:150px;text-align:center;letter-spacing:-0.2px;">Zoom</div>
<div style="left:1524.0px;top:233.5px;height:14px;line-height:14px;font-size:11px;color:#333;width:150px;text-align:center;letter-spacing:-0.2px;">Verification</div>
<div style="left:1730.0px;top:233.5px;height:14px;line-height:14px;font-size:11px;color:#333;width:150px;text-align:center;letter-spacing:-0.2px;">Reports</div>
<div style="left:1869.0px;top:233.5px;height:14px;line-height:14px;font-size:11px;color:#333;width:150px;text-align:center;letter-spacing:-0.2px;">TakeOff</div>
<svg style="left:531px;top:203px;" width="26" height="26" viewBox="0 0 26 26"><path d="M13,0 L13,26 M0,13 L26,13" stroke="#0e1f2b" stroke-width="5.4"/></svg>
<svg style="left:577px;top:200px;" width="26" height="33" viewBox="0 0 26 33"><rect x="0.5" y="0" width="24" height="2" fill="#0e1f2b"/><path d="M0,17 L12.5,5 L25,17 Z" fill="#0e1f2b"/><rect x="5" y="16.5" width="15" height="16" fill="#0e1f2b"/><rect x="8" y="21" width="9" height="2.6" fill="#fff"/></svg>
<svg style="left:621px;top:200px;" width="25" height="33" viewBox="0 0 25 33"><rect x="5.5" y="0" width="13.5" height="17.5" fill="#0e1f2b"/><path d="M0,17 L24,17 L12,27 Z" fill="#0e1f2b"/><rect x="8" y="7.5" width="9" height="2.6" fill="#fff"/><rect x="1" y="30" width="23" height="2.2" fill="#0e1f2b"/></svg>
<svg style="left:666px;top:200px;" width="26" height="33" viewBox="0 0 26 33"><rect x="4" y="3" width="3" height="14" fill="#0e1f2b"/><rect x="6" y="0" width="13.5" height="17.5" fill="#0e1f2b"/><path d="M0,18 L12.5,30 L25,18 Z" fill="none" stroke="#0e1f2b" stroke-width="1.4"/><path d="M1,16 L25,16 L13,27 Z" fill="#0e1f2b"/><rect x="1.5" y="30" width="22" height="2.2" fill="#0e1f2b"/></svg>
<svg style="left:709px;top:210px;" width="31" height="13" viewBox="0 0 31 13"><rect x="0.5" y="0.8" width="30" height="11" rx="5.5" fill="#1c2b36"/><circle cx="24.5" cy="6.3" r="4" fill="#fff"/></svg>
<svg style="left:764px;top:200px;" width="27" height="33" viewBox="0 0 27 33"><rect x="7" y="0" width="13" height="14" fill="#0e1f2b"/><path d="M13.5,2.5 L13.5,11.5 M9,7 L18,7" stroke="#fff" stroke-width="2"/><path d="M0,15 L27,15 L13.5,26 Z" fill="#0e1f2b"/><rect x="1" y="29" width="25" height="2.2" fill="#0e1f2b"/></svg>
<svg style="left:809px;top:199.6px;" width="27" height="33" viewBox="0 0 27 33"><path d="M1.2,23.5 L1.2,4.5 C1.2,3.5 2,2.8 3,2.8 L16,2.8" fill="none" stroke="#0e1f2b" stroke-width="1.8"/><path d="M5.6,6.9 L17,6.9 L25,14.8 L25,29.5 C25,30.4 24.4,31 23.5,31 L7.1,31 C6.2,31 5.6,30.4 5.6,29.5 Z" fill="#fff" stroke="#0e1f2b" stroke-width="2.1"/><path d="M17,6.9 L17,14.8 L25,14.8" fill="none" stroke="#0e1f2b" stroke-width="1.8"/></svg>
<svg style="left:853px;top:200px;" width="28" height="34" viewBox="0 0 28 34"><path d="M7.2,1.6 C8.2,1.1 9.3,1.6 9.8,2.6 L19.6,22.2 L17.0,23.6 L6.4,5.0 C5.9,3.8 6.3,2.2 7.2,1.6 Z" fill="#0e1f2b"/><path d="M20.8,1.6 C19.8,1.1 18.7,1.6 18.2,2.6 L8.4,22.2 L11.0,23.6 L21.6,5.0 C22.1,3.8 21.7,2.2 20.8,1.6 Z" fill="#0e1f2b"/><circle cx="14" cy="17.3" r="0.9" fill="#fff"/><ellipse cx="5.8" cy="27" rx="3.6" ry="5.5" fill="none" stroke="#0e1f2b" stroke-width="2.5" transform="rotate(25 5.8 27)"/><ellipse cx="22.2" cy="27" rx="3.6" ry="5.5" fill="none" stroke="#0e1f2b" stroke-width="2.5" transform="rotate(-25 22.2 27)"/></svg>
<svg style="left:902px;top:201px;" width="24" height="30" viewBox="0 0 24 30"><path d="M3,4.4 L1.5,4.4 L1.5,22.5 L8.3,22.5" fill="none" stroke="#0e1f2b" stroke-width="1.5"/><path d="M16.8,4.4 L16.8,9.4" fill="none" stroke="#0e1f2b" stroke-width="1.5"/><rect x="4.3" y="4" width="10.2" height="2.4" fill="#0e1f2b"/><path d="M7.2,4.2 A2,2 0 0 1 11.2,4.2" fill="none" stroke="#0e1f2b" stroke-width="1.4"/><path d="M8.3,14 L12.8,9.4 L21.3,9.4 L21.3,27.5 L8.3,27.5 Z" fill="#fff" stroke="#0e1f2b" stroke-width="1.6"/><path d="M8.3,14 L12.8,14 L12.8,9.4" fill="none" stroke="#0e1f2b" stroke-width="1.4"/></svg>
<svg style="left:955px;top:200px;" width="21" height="31" viewBox="0 0 21 31"><rect x="0" y="1" width="20" height="2" fill="#7a7a7a"/><path d="M10,6 L10,29 M2,14 L10,6 L18,14" stroke="#7a7a7a" stroke-width="2.4" fill="none"/></svg>
<svg style="left:1000px;top:204px;" width="20" height="27" viewBox="0 0 20 27"><path d="M10,1.5 L10,25 M1.5,10 L10,1.5 L18.5,10" stroke="#7a7a7a" stroke-width="2.4" fill="none"/></svg>
<svg style="left:1045px;top:204px;" width="20" height="27" viewBox="0 0 20 27"><path d="M10,1 L10,24 M1.5,15.5 L10,24 L18.5,15.5" stroke="#111" stroke-width="2.6" fill="none"/></svg>
<svg style="left:1090px;top:202px;" width="21" height="30" viewBox="0 0 21 30"><path d="M10.5,0 L10.5,23 M2,14.5 L10.5,23 L19,14.5" stroke="#111" stroke-width="2.6" fill="none"/><rect x="0" y="26.5" width="21" height="2.4" fill="#111"/></svg>
<div style="left:1137px;top:203px;width:150px;height:20px;border:1px solid #b0b0b0;background:#fff;"></div>
<div style="left:1269px;top:204px;width:17px;height:18px;border-left:1px solid #d0d0d0;background:#f4f4f4;"></div>
<svg style="left:1273px;top:210px;" width="9" height="6" viewBox="0 0 9 6"><path d="M0.5,0.5 L8,0.5 L4.2,5 Z" fill="#777"/></svg>
<div style="left:1141px;top:205.5px;height:15px;line-height:15px;font-size:11.5px;color:#222;">English</div>
<svg style="left:1303px;top:204px;" width="27" height="24" viewBox="0 0 27 24"><rect x="1" y="1" width="24.5" height="21.5" rx="1" fill="none" stroke="#0e1f2b" stroke-width="2"/><path d="M3.5,19.5 L10,10 L15,15 L18,12.5 L23,19.5 Z" fill="#0e1f2b"/><circle cx="19" cy="6.5" r="2.5" fill="#0e1f2b"/></svg>
<svg style="left:1356px;top:202px;" width="28" height="28" viewBox="0 0 28 28"><circle cx="10" cy="10" r="8.2" fill="none" stroke="#0e1f2b" stroke-width="2.8"/><path d="M16,16 L25.5,25.5" stroke="#0e1f2b" stroke-width="3.6" stroke-linecap="round"/><path d="M5.5,10 L14.5,10" stroke="#0e1f2b" stroke-width="2.4"/><path d="M10,5.5 L10,14.5" stroke="#0e1f2b" stroke-width="2.4"/></svg>
<svg style="left:1400px;top:202px;" width="28" height="28" viewBox="0 0 28 28"><circle cx="10" cy="10" r="8.2" fill="none" stroke="#0e1f2b" stroke-width="2.8"/><path d="M16,16 L25.5,25.5" stroke="#0e1f2b" stroke-width="3.6" stroke-linecap="round"/><path d="M5.5,10 L14.5,10" stroke="#0e1f2b" stroke-width="2.4"/></svg>
<svg style="left:1446px;top:203px;" width="27" height="27" viewBox="0 0 27 27"><path d="M0,0 L10.4,0 L0,10.4 Z M26,0 L15.6,0 L26,10.4 Z M0,26 L10.4,26 L0,15.6 Z M26,26 L15.6,26 L26,15.6 Z" fill="#0e1f2b"/><path d="M4,4 L9.6,9.6 M22,4 L16.4,9.6 M4,22 L9.6,16.4 M22,22 L16.4,16.4" stroke="#0e1f2b" stroke-width="3.6" stroke-linecap="round"/></svg>
<svg style="left:1498px;top:203px;" width="28" height="27" viewBox="0 0 28 27"><path d="M2,13 A12,12 0 0 1 23.2,5.3" fill="none" stroke="#0e1f2b" stroke-width="2.7"/><path d="M26.8,0.9 L26.8,9.9 L18,9.9 Z" fill="#0e1f2b"/><path d="M26,13 A12,12 0 0 1 4.8,20.7" fill="none" stroke="#0e1f2b" stroke-width="2.7"/><path d="M0.9,16 L9.9,16 L0.9,25 Z" fill="#0e1f2b"/></svg>
<svg style="left:1541px;top:201px;" width="33" height="32" viewBox="0 0 33 32"><rect x="0" y="0" width="15" height="15" rx="1.5" fill="#0e1f2b"/><rect x="17" y="0" width="15" height="15" rx="1.5" fill="#0e1f2b"/><rect x="0" y="17" width="15" height="15" rx="1.5" fill="#0e1f2b"/><rect x="17" y="17" width="15" height="15" rx="1.5" fill="#0e1f2b"/><path d="M3,7.5 L12,7.5 M20,5 L29,5 M20,10 L29,10 M7.5,20 L7.5,29 M3,24.5 L12,24.5 M21,21 L28,28 M28,21 L21,28" stroke="#fff" stroke-width="2"/></svg>
<svg style="left:1587px;top:206px;" width="28" height="15" viewBox="0 0 28 15"><defs><radialGradient id="gd" cx="0.4" cy="0.35" r="0.6"><stop offset="0" stop-color="#b6f0a8"/><stop offset="1" stop-color="#2c9a3a"/></radialGradient></defs><circle cx="7" cy="7" r="6" fill="url(#gd)"/><path d="M19,7 L25,7 L22,10 Z" fill="#222"/></svg>
<svg style="left:1627px;top:204px;" width="33" height="26" viewBox="0 0 33 26"><path d="M2,11.8 L11.8,21.5 L29.6,3" stroke="#0e1f2b" stroke-width="6.2" fill="none"/></svg>
<svg style="left:1680px;top:199px;" width="20" height="34" viewBox="0 0 20 34"><path d="M17.3,8 C16,5.5 13.2,4.6 10.2,4.6 C6.2,4.6 3.4,6.8 3.4,10.2 C3.4,14 7,15 10.2,16 C14,17.1 17.4,18.6 17.4,23 C17.4,27 14.2,29.2 10.2,29.2 C6.6,29.2 3.6,28 2,25.2" fill="none" stroke="#0e1f2b" stroke-width="2.6"/><path d="M10.2,1 L10.2,4.6 M10.2,29.2 L10.2,33" stroke="#0e1f2b" stroke-width="2.4"/></svg>
<svg style="left:1731px;top:202px;" width="22" height="29" viewBox="0 0 22 29"><path d="M3.5,1.4 L14.5,1.4 L20,7 L20,25.8 C20,26.8 19.4,27.4 18.4,27.4 L3.5,27.4 C2.5,27.4 1.9,26.8 1.9,25.8 L1.9,3 C1.9,2 2.5,1.4 3.5,1.4 Z" fill="none" stroke="#0e1f2b" stroke-width="1.8"/><path d="M14.5,1.4 L14.5,7 L20,7" fill="none" stroke="#0e1f2b" stroke-width="1.4"/><path d="M4.8,15 L17.2,15 M4.8,18.3 L17.2,18.3 M4.8,21.7 L17.2,21.7" stroke="#0e1f2b" stroke-width="1.4"/></svg>
<svg style="left:1771px;top:200px;" width="30" height="33" viewBox="0 0 30 33"><path d="M3,1.5 L21.5,1.5 L28,8 L28,29.6 C28,30.4 27.4,31 26.6,31 L3,31 C2.2,31 1.6,30.4 1.6,29.6 L1.6,2.9 C1.6,2.1 2.2,1.5 3,1.5 Z" fill="none" stroke="#0e1f2b" stroke-width="2.4"/><path d="M21.5,1.5 L21.5,8 L28,8" fill="none" stroke="#0e1f2b" stroke-width="1.8"/><path d="M8.6,11.8 L13.2,11.8 L22.4,27.7 L17.6,27.7 Z" fill="#0e1f2b"/><path d="M17.6,11.8 L21.4,11.8 L12.4,27.7 L8.3,27.7 Z" fill="#0e1f2b"/></svg>
<svg style="left:1815px;top:202px;" width="33" height="29" viewBox="0 0 33 29"><rect x="6.2" y="0.2" width="16" height="3.8" fill="#0e1f2b"/><rect x="0" y="5.9" width="32" height="14.1" rx="2.5" fill="#0e1f2b"/><rect x="9.3" y="15.3" width="13.8" height="11.2" fill="#fff" stroke="#0e1f2b" stroke-width="2.6"/><circle cx="3.9" cy="9.8" r="1.7" fill="#fff"/></svg>
<svg style="left:1870px;top:212px;" width="8" height="5" viewBox="0 0 8 5"><path d="M0.5,0.5 L7.5,0.5 L4,4 Z" fill="#111"/></svg>
<svg style="left:1908.8px;top:206.7px;" width="32.2" height="18.8" viewBox="0 0 32.2 18.8"><g transform="scale(0.7591,0.8522)"><path d="M0,11.31 L7.58,4.18 L11.2,7.58 L8.03,11.42 L12.56,15.04 L16.63,12.1 L20.25,15.5 L12.67,22.06 Z" fill="#f7870f"/><path d="M12.67,0 L8.83,3.39 L30.21,22.06 L42.42,11.42 L30.21,0 L22.29,6.56 L26.36,9.95 L30.21,6.9 L34.96,11.42 L30.21,15.27 Z" fill="#f7870f"/></g></svg>
<svg style="left:1963px;top:212px;" width="8" height="5" viewBox="0 0 8 5"><path d="M0.5,0.5 L7.5,0.5 L4,4 Z" fill="#111"/></svg>
<div style="left:538px;top:262px;width:13px;height:13px;border:1px solid #8a8a8a;background:#fff;"></div>
<div style="left:554px;top:260.5px;height:15px;line-height:15px;font-size:11.5px;color:#333;letter-spacing:-0.2px;">Option special</div>
<div style="left:650px;top:257px;width:40px;height:22px;background:#d9d9d9;"></div>
<div style="left:693px;top:258px;width:1px;height:20px;background:#c8c8c8;"></div>
<div style="left:755px;top:258px;width:1px;height:20px;background:#c8c8c8;"></div>
<div style="left:815px;top:258px;width:1px;height:20px;background:#c8c8c8;"></div>
<div style="left:874px;top:258px;width:1px;height:20px;background:#c8c8c8;"></div>
<div style="left:964px;top:258px;width:1px;height:20px;background:#c8c8c8;"></div>
<div style="left:1085px;top:258px;width:1px;height:20px;background:#c8c8c8;"></div>
<div style="left:1121px;top:258px;width:1px;height:20px;background:#c8c8c8;"></div>
<div style="left:1121px;top:255px;width:1px;height:40px;background:#d4d4d4;"></div>
<div style="left:655px;top:260.0px;height:16px;line-height:16px;font-size:12.5px;color:#333;font-weight:bold;letter-spacing:-0.1px;">Cost</div>
<div style="left:703px;top:260.0px;height:16px;line-height:16px;font-size:12.5px;color:#333;font-weight:bold;letter-spacing:-0.1px;">Admin.</div>
<div style="left:765px;top:260.0px;height:16px;line-height:16px;font-size:12.5px;color:#333;font-weight:bold;letter-spacing:-0.1px;">Profits</div>
<div style="left:825px;top:260.0px;height:16px;line-height:16px;font-size:12.5px;color:#333;font-weight:bold;letter-spacing:-0.1px;">Selling</div>
<div style="left:884px;top:260.0px;height:16px;line-height:16px;font-size:12.5px;color:#333;font-weight:bold;letter-spacing:-0.1px;">Opt.Config.</div>
<div style="left:974px;top:260.0px;height:16px;line-height:16px;font-size:12.5px;color:#333;font-weight:bold;letter-spacing:-0.1px;">Shipping.Config.</div>
<svg style="left:1095px;top:260px;" width="17" height="17" viewBox="0 0 17 17"><circle cx="8.5" cy="8.5" r="5.2" fill="none" stroke="#0e1f2b" stroke-width="3.4"/><path d="M8.5,0.5 L8.5,16.5 M0.5,8.5 L16.5,8.5 M2.8,2.8 L14.2,14.2 M14.2,2.8 L2.8,14.2" stroke="#0e1f2b" stroke-width="3"/><circle cx="8.5" cy="8.5" r="2.2" fill="#fff"/></svg>
<div style="left:1639px;top:258px;width:176px;height:20px;border:1px solid #b0b0b0;background:#fff;"></div>
<div style="left:1798px;top:259px;width:16px;height:18px;border-left:1px solid #d0d0d0;background:#f4f4f4;"></div>
<svg style="left:1801px;top:265px;" width="9" height="6" viewBox="0 0 9 6"><path d="M0.5,0.5 L8,0.5 L4.2,5 Z" fill="#777"/></svg>
<div style="left:1642px;top:260.5px;height:15px;line-height:15px;font-size:11.5px;color:#222;letter-spacing:-0.1px;">Assembly and options</div>
<svg style="left:534px;top:284px;" width="86" height="32" viewBox="0 0 86 32"><path d="M4.1,27.7 L5.6,20.9 L19.5,7.5 L24.3,12.3 L11.2,26.2 Z" fill="#0e1f2b"/><circle cx="24.3" cy="7.5" r="3.9" fill="#0e1f2b"/><path d="M19.6,6.0 L25.8,12.2" stroke="#fff" stroke-width="1.1"/><path d="M10.1,22.1 L19.8,12.2" stroke="#fff" stroke-width="1.1"/><path d="M36.6,7.5 L51.5,7.5 L53.5,9.5 L53.5,24.3 L36.6,24.3 Z" fill="none" stroke="#6e6e6e" stroke-width="2.2"/><rect x="38.9" y="8.6" width="10.9" height="6" fill="#6e6e6e"/><rect x="44.9" y="9.3" width="2.2" height="4.2" fill="#fff"/><path d="M63.2,13.5 L70.3,6.7 L70.3,20.2 Z" fill="#6e6e6e"/><path d="M70,11.2 C76,11 79.2,14.5 79.2,18.5 C79.2,21.5 77.8,24 76.3,25.4 C77,21.5 76,16 70,15.9 Z" fill="#6e6e6e"/></svg>
<div style="left:623px;top:291px;width:498px;height:20px;border:1px solid #c4c4c4;border-top:2px solid #7a7a7a;border-left:2px solid #8a8a8a;background:#fff;"></div>
<svg style="left:1148px;top:291px;" width="22" height="21" viewBox="0 0 22 21"><ellipse cx="11" cy="3.5" rx="9.5" ry="2.8" fill="none" stroke="#0e1f2b" stroke-width="1.8"/><path d="M1.5,4 L9,12 L9,20.5 L13,20.5 L13,12 L20.5,4 C17,7 5,7 1.5,4 Z" fill="#0e1f2b"/><path d="M9,5.8 L13,9.6 M13,5.8 L9,9.6" stroke="#fff" stroke-width="1.2"/></svg>
<svg style="left:1182px;top:292px;" width="18" height="18" viewBox="0 0 18 18"><g transform="scale(0.64)"><path d="M2,13 A12,12 0 0 1 23.2,5.3" fill="none" stroke="#0e1f2b" stroke-width="3.4"/><path d="M26.8,0.9 L26.8,9.9 L18,9.9 Z" fill="#0e1f2b"/><path d="M26,13 A12,12 0 0 1 4.8,20.7" fill="none" stroke="#0e1f2b" stroke-width="3.4"/><path d="M0.9,16 L9.9,16 L0.9,25 Z" fill="#0e1f2b"/></g></svg>
<div style="left:1209px;top:291px;width:1090px;height:20px;border:1px solid #b8b8b8;background:#fff;"></div>
<div style="left:1212px;top:293.5px;height:15px;line-height:15px;font-size:11.5px;color:#222;letter-spacing:-0.1px;">Search for an item</div>
<div style="left:516px;top:318px;width:1774px;height:1px;background:#bbb;"></div>
<div style="left:516px;top:319px;width:1774px;height:20px;background:#232a35;"></div>
<div style="left:529px;top:320px;width:1px;height:19px;background:#e6e6e6;"></div>
<div style="left:542px;top:320px;width:1px;height:19px;background:#e6e6e6;"></div>
<div style="left:555px;top:320px;width:1px;height:19px;background:#e6e6e6;"></div>
<div style="left:568px;top:320px;width:1px;height:19px;background:#e6e6e6;"></div>
<div style="left:581px;top:320px;width:1px;height:19px;background:#e6e6e6;"></div>
<div style="left:594px;top:320px;width:1px;height:19px;background:#e6e6e6;"></div>
<div style="left:607px;top:320px;width:1px;height:19px;background:#e6e6e6;"></div>
<div style="left:657px;top:320px;width:1px;height:19px;background:#e6e6e6;"></div>
<div style="left:682px;top:320px;width:1px;height:19px;background:#e6e6e6;"></div>
<div style="left:713px;top:320px;width:2px;height:19px;background:#e6e6e6;"></div>
<div style="left:749px;top:320px;width:2px;height:19px;background:#e6e6e6;"></div>
<div style="left:1052px;top:320px;width:1px;height:19px;background:#e6e6e6;"></div>
<div style="left:1352px;top:320px;width:1px;height:19px;background:#e6e6e6;"></div>
<div style="left:1404px;top:320px;width:2px;height:19px;background:#e6e6e6;"></div>
<div style="left:1419px;top:320px;width:2px;height:19px;background:#e6e6e6;"></div>
<div style="left:1450px;top:320px;width:1px;height:19px;background:#e6e6e6;"></div>
<div style="left:443.0px;top:321.0px;height:16px;line-height:16px;font-size:12.5px;color:#fff;font-weight:bold;width:160px;text-align:center;letter-spacing:-0.3px;">1</div>
<div style="left:456.0px;top:321.0px;height:16px;line-height:16px;font-size:12.5px;color:#fff;font-weight:bold;width:160px;text-align:center;letter-spacing:-0.3px;">2</div>
<div style="left:469.0px;top:321.0px;height:16px;line-height:16px;font-size:12.5px;color:#fff;font-weight:bold;width:160px;text-align:center;letter-spacing:-0.3px;">3</div>
<div style="left:482.0px;top:321.0px;height:16px;line-height:16px;font-size:12.5px;color:#fff;font-weight:bold;width:160px;text-align:center;letter-spacing:-0.3px;">4</div>
<div style="left:495.0px;top:321.0px;height:16px;line-height:16px;font-size:12.5px;color:#fff;font-weight:bold;width:160px;text-align:center;letter-spacing:-0.3px;">5</div>
<div style="left:508.0px;top:321.0px;height:16px;line-height:16px;font-size:12.5px;color:#fff;font-weight:bold;width:160px;text-align:center;letter-spacing:-0.3px;">6</div>
<div style="left:521.0px;top:321.0px;height:16px;line-height:16px;font-size:12.5px;color:#fff;font-weight:bold;width:160px;text-align:center;letter-spacing:-0.3px;">*</div>
<div style="left:552.0px;top:321.0px;height:16px;line-height:16px;font-size:12.5px;color:#fff;font-weight:bold;width:160px;text-align:center;letter-spacing:-0.3px;">Edit</div>
<div style="left:590.0px;top:321.0px;height:16px;line-height:16px;font-size:12.5px;color:#fff;font-weight:bold;width:160px;text-align:center;letter-spacing:-0.3px;">O</div>
<div style="left:618.0px;top:321.0px;height:16px;line-height:16px;font-size:12.5px;color:#fff;font-weight:bold;width:160px;text-align:center;letter-spacing:-0.3px;">Incl.</div>
<div style="left:652.0px;top:321.0px;height:16px;line-height:16px;font-size:12.5px;color:#fff;font-weight:bold;width:160px;text-align:center;letter-spacing:-0.3px;">Type</div>
<div style="left:821.0px;top:321.0px;height:16px;line-height:16px;font-size:12.5px;color:#fff;font-weight:bold;width:160px;text-align:center;letter-spacing:-0.3px;">Name</div>
<div style="left:1122.0px;top:321.0px;height:16px;line-height:16px;font-size:12.5px;color:#fff;font-weight:bold;width:160px;text-align:center;letter-spacing:-0.3px;">Identification</div>
<div style="left:1298.0px;top:321.0px;height:16px;line-height:16px;font-size:12.5px;color:#fff;font-weight:bold;width:160px;text-align:center;letter-spacing:-0.3px;">Alt.</div>
<div style="left:1332.0px;top:321.0px;height:16px;line-height:16px;font-size:12.5px;color:#fff;font-weight:bold;width:160px;text-align:center;letter-spacing:-0.3px;">+</div>
<div style="left:1355.0px;top:321.0px;height:16px;line-height:16px;font-size:12.5px;color:#fff;font-weight:bold;width:160px;text-align:center;letter-spacing:-0.3px;">C/P</div>
<div style="left:1860.0px;top:321.0px;height:16px;line-height:16px;font-size:12.5px;color:#fff;font-weight:bold;width:160px;text-align:center;letter-spacing:-0.3px;">Optional settings</div>
<div style="left:516px;top:339px;width:1774px;height:3px;background:#366a8f;"></div>
<div style="left:516px;top:341px;width:1774px;height:1px;background:#e8eef3;"></div>
<div style="left:516px;top:342px;width:1774px;height:19px;background:#366a8f;"></div>
<div style="left:516px;top:361px;width:1774px;height:1px;background:#e8eef3;"></div>
<div style="left:1449px;top:342px;width:1px;height:20px;background:#6a6a6a;"></div>
<div style="left:753px;top:342.7px;height:16px;line-height:16px;font-size:12px;color:#fff;font-weight:bold;letter-spacing:-0.05px;">07 Roof System</div>
<div style="left:537px;top:351px;width:8px;height:1px;background:#111;"></div>
<svg style="left:545px;top:347px;" width="9" height="9" viewBox="0 0 9 9"><rect x="0.5" y="0.5" width="8" height="8" fill="#f4f4f4" stroke="#8a8a8a" stroke-width="1"/><path d="M2,4.5 L7,4.5" stroke="#2b3a8a" stroke-width="1.2"/><path d="M4.5,2 L4.5,7" stroke="#2b3a8a" stroke-width="1.2"/></svg>
<svg style="left:1428px;top:344px;" width="14" height="16" viewBox="0 0 14 16"><rect x="3" y="0" width="8" height="8" fill="#0e1f2b"/><path d="M7,1.3 L7,6.5 M4.4,3.9 L9.6,3.9" stroke="#fff" stroke-width="1.3"/><path d="M0.5,7.5 L13.5,7.5 L7,14.5 Z" fill="#0e1f2b"/></svg>
<div style="left:516px;top:362px;width:1774px;height:35px;background:#366a8f;"></div>
<div style="left:516px;top:397px;width:1774px;height:1px;background:#e8eef3;"></div>
<div style="left:1449px;top:362px;width:1px;height:36px;background:#6a6a6a;"></div>
<div style="left:658px;top:378px;width:25px;height:19px;background:#f2c500;"></div>
<div style="left:655.5px;top:380.0px;height:15px;line-height:15px;font-size:11.5px;color:#111;width:30px;text-align:center;">0</div>
<div style="left:753px;top:378.7px;height:16px;line-height:16px;font-size:12px;color:#fff;font-weight:bold;letter-spacing:-0.05px;">07 Thermal Moisture Protection</div>
<div style="left:537px;top:369px;width:8px;height:1px;background:#111;"></div>
<div style="left:537px;top:387px;width:8px;height:1px;background:#111;"></div>
<svg style="left:545px;top:383px;" width="9" height="9" viewBox="0 0 9 9"><rect x="0.5" y="0.5" width="8" height="8" fill="#f4f4f4" stroke="#8a8a8a" stroke-width="1"/><path d="M2,4.5 L7,4.5" stroke="#2b3a8a" stroke-width="1.2"/><path d="M4.5,2 L4.5,7" stroke="#2b3a8a" stroke-width="1.2"/></svg>
<svg style="left:1428px;top:380px;" width="14" height="16" viewBox="0 0 14 16"><rect x="3" y="0" width="8" height="8" fill="#0e1f2b"/><path d="M7,1.3 L7,6.5 M4.4,3.9 L9.6,3.9" stroke="#fff" stroke-width="1.3"/><path d="M0.5,7.5 L13.5,7.5 L7,14.5 Z" fill="#0e1f2b"/></svg>
<div style="left:1451px;top:378px;width:839px;height:19px;background:#fbf5e3;"></div>
<div style="left:1429.5px;top:364.0px;height:13px;line-height:13px;font-size:10.3px;color:#fff;width:160px;text-align:center;letter-spacing:-0.35px;">LegLength</div>
<div style="left:1486.5px;top:379.7px;height:14px;line-height:14px;font-size:11px;color:#111;letter-spacing:-0.1px;text-decoration:underline;">0,00</div>
<div style="left:1514.5px;top:379.7px;height:14px;line-height:14px;font-size:11px;color:#111;letter-spacing:-0.1px;text-decoration:underline;">ft</div>
<div style="left:1546.0px;top:364.0px;height:13px;line-height:13px;font-size:10.3px;color:#fff;width:160px;text-align:center;letter-spacing:-0.35px;">Lintlenght</div>
<div style="left:1603.0px;top:379.7px;height:14px;line-height:14px;font-size:11px;color:#111;letter-spacing:-0.1px;text-decoration:underline;">0,00</div>
<div style="left:1631.0px;top:379.7px;height:14px;line-height:14px;font-size:11px;color:#111;letter-spacing:-0.1px;text-decoration:underline;">ft</div>
<div style="left:1648.0px;top:364.0px;height:13px;line-height:13px;font-size:10.3px;color:#fff;width:160px;text-align:center;letter-spacing:-0.35px;">TreshLength</div>
<div style="left:1705.0px;top:379.7px;height:14px;line-height:14px;font-size:11px;color:#111;letter-spacing:-0.1px;text-decoration:underline;">0,00</div>
<div style="left:1733.0px;top:379.7px;height:14px;line-height:14px;font-size:11px;color:#111;letter-spacing:-0.1px;text-decoration:underline;">ft</div>
<div style="left:1746.0px;top:364.0px;height:13px;line-height:13px;font-size:10.3px;color:#fff;width:160px;text-align:center;letter-spacing:-0.35px;">ExtWallOpenSurf</div>
<div style="left:1803.0px;top:379.7px;height:14px;line-height:14px;font-size:11px;color:#111;letter-spacing:-0.1px;text-decoration:underline;">0,00</div>
<div style="left:1831.0px;top:379.7px;height:14px;line-height:14px;font-size:11px;color:#111;letter-spacing:-0.1px;text-decoration:underline;">ft2</div>
<div style="left:1841.0px;top:364.0px;height:13px;line-height:13px;font-size:10.3px;color:#fff;width:160px;text-align:center;letter-spacing:-0.35px;">WindPerim</div>
<div style="left:1898.0px;top:379.7px;height:14px;line-height:14px;font-size:11px;color:#111;letter-spacing:-0.1px;text-decoration:underline;">0,00</div>
<div style="left:1926.0px;top:379.7px;height:14px;line-height:14px;font-size:11px;color:#111;letter-spacing:-0.1px;text-decoration:underline;">ft</div>
<div style="left:1945.0px;top:364.0px;height:13px;line-height:13px;font-size:10.3px;color:#fff;width:160px;text-align:center;letter-spacing:-0.35px;">ExtDoorMoldgLength</div>
<div style="left:2002.0px;top:379.7px;height:14px;line-height:14px;font-size:11px;color:#111;letter-spacing:-0.1px;text-decoration:underline;">0,00</div>
<div style="left:2030.0px;top:379.7px;height:14px;line-height:14px;font-size:11px;color:#111;letter-spacing:-0.1px;text-decoration:underline;">ft</div>
<div style="left:2069.0px;top:364.0px;height:13px;line-height:13px;font-size:10.3px;color:#fff;width:160px;text-align:center;letter-spacing:-0.35px;">PerimOuvExt</div>
<div style="left:2126.0px;top:379.7px;height:14px;line-height:14px;font-size:11px;color:#111;letter-spacing:-0.1px;text-decoration:underline;">0,00</div>
<div style="left:2154.0px;top:379.7px;height:14px;line-height:14px;font-size:11px;color:#111;letter-spacing:-0.1px;text-decoration:underline;">ft</div>
<div style="left:2182.0px;top:364.0px;height:13px;line-height:13px;font-size:10.3px;color:#fff;width:160px;text-align:center;letter-spacing:-0.35px;">LongPerimPortOuv</div>
<div style="left:2239.0px;top:379.7px;height:14px;line-height:14px;font-size:11px;color:#111;letter-spacing:-0.1px;text-decoration:underline;">0,00</div>
<div style="left:2267.0px;top:379.7px;height:14px;line-height:14px;font-size:11px;color:#111;letter-spacing:-0.1px;text-decoration:underline;">ft</div>
<div style="left:516px;top:398px;width:1774px;height:19px;background:#366a8f;"></div>
<div style="left:516px;top:417px;width:1774px;height:1px;background:#e8eef3;"></div>
<div style="left:1449px;top:398px;width:1px;height:20px;background:#6a6a6a;"></div>
<div style="left:753px;top:398.7px;height:16px;line-height:16px;font-size:12px;color:#fff;font-weight:bold;letter-spacing:-0.05px;">08 Commercial glazing</div>
<div style="left:537px;top:407px;width:8px;height:1px;background:#111;"></div>
<svg style="left:545px;top:403px;" width="9" height="9" viewBox="0 0 9 9"><rect x="0.5" y="0.5" width="8" height="8" fill="#f4f4f4" stroke="#8a8a8a" stroke-width="1"/><path d="M2,4.5 L7,4.5" stroke="#2b3a8a" stroke-width="1.2"/><path d="M4.5,2 L4.5,7" stroke="#2b3a8a" stroke-width="1.2"/></svg>
<svg style="left:1428px;top:400px;" width="14" height="16" viewBox="0 0 14 16"><rect x="3" y="0" width="8" height="8" fill="#0e1f2b"/><path d="M7,1.3 L7,6.5 M4.4,3.9 L9.6,3.9" stroke="#fff" stroke-width="1.3"/><path d="M0.5,7.5 L13.5,7.5 L7,14.5 Z" fill="#0e1f2b"/></svg>
<div style="left:516px;top:418px;width:1774px;height:35px;background:#366a8f;"></div>
<div style="left:516px;top:453px;width:1774px;height:1px;background:#e8eef3;"></div>
<div style="left:1449px;top:418px;width:1px;height:36px;background:#6a6a6a;"></div>
<div style="left:658px;top:434px;width:25px;height:19px;background:#f2c500;"></div>
<div style="left:655.5px;top:436.0px;height:15px;line-height:15px;font-size:11.5px;color:#111;width:30px;text-align:center;">0</div>
<div style="left:753px;top:434.7px;height:16px;line-height:16px;font-size:12px;color:#fff;font-weight:bold;letter-spacing:-0.05px;">08 Doors and windows</div>
<div style="left:537px;top:425px;width:8px;height:1px;background:#111;"></div>
<div style="left:537px;top:443px;width:8px;height:1px;background:#111;"></div>
<svg style="left:545px;top:439px;" width="9" height="9" viewBox="0 0 9 9"><rect x="0.5" y="0.5" width="8" height="8" fill="#f4f4f4" stroke="#8a8a8a" stroke-width="1"/><path d="M2,4.5 L7,4.5" stroke="#2b3a8a" stroke-width="1.2"/><path d="M4.5,2 L4.5,7" stroke="#2b3a8a" stroke-width="1.2"/></svg>
<svg style="left:1428px;top:436px;" width="14" height="16" viewBox="0 0 14 16"><rect x="3" y="0" width="8" height="8" fill="#0e1f2b"/><path d="M7,1.3 L7,6.5 M4.4,3.9 L9.6,3.9" stroke="#fff" stroke-width="1.3"/><path d="M0.5,7.5 L13.5,7.5 L7,14.5 Z" fill="#0e1f2b"/></svg>
<div style="left:1451px;top:434px;width:760px;height:19px;background:#fbf5e3;"></div>
<div style="left:1429.5px;top:420.0px;height:13px;line-height:13px;font-size:10.3px;color:#fff;width:160px;text-align:center;letter-spacing:-0.35px;">LegLength-s</div>
<div style="left:1486.5px;top:435.7px;height:14px;line-height:14px;font-size:11px;color:#111;letter-spacing:-0.1px;text-decoration:underline;">0,00</div>
<div style="left:1514.5px;top:435.7px;height:14px;line-height:14px;font-size:11px;color:#111;letter-spacing:-0.1px;text-decoration:underline;">ft</div>
<div style="left:1546.0px;top:420.0px;height:13px;line-height:13px;font-size:10.3px;color:#fff;width:160px;text-align:center;letter-spacing:-0.35px;">TreshLength-s</div>
<div style="left:1603.0px;top:435.7px;height:14px;line-height:14px;font-size:11px;color:#111;letter-spacing:-0.1px;text-decoration:underline;">0,00</div>
<div style="left:1631.0px;top:435.7px;height:14px;line-height:14px;font-size:11px;color:#111;letter-spacing:-0.1px;text-decoration:underline;">ft</div>
<div style="left:1648.0px;top:420.0px;height:13px;line-height:13px;font-size:10.3px;color:#fff;width:160px;text-align:center;letter-spacing:-0.35px;">IntDoorSurf-s</div>
<div style="left:1705.0px;top:435.7px;height:14px;line-height:14px;font-size:11px;color:#111;letter-spacing:-0.1px;text-decoration:underline;">0,00</div>
<div style="left:1733.0px;top:435.7px;height:14px;line-height:14px;font-size:11px;color:#111;letter-spacing:-0.1px;text-decoration:underline;">ft2</div>
<div style="left:1746.0px;top:420.0px;height:13px;line-height:13px;font-size:10.3px;color:#fff;width:160px;text-align:center;letter-spacing:-0.35px;">NbIntLint-s</div>
<div style="left:1803.0px;top:435.7px;height:14px;line-height:14px;font-size:11px;color:#111;letter-spacing:-0.1px;text-decoration:underline;">0,00</div>
<div style="left:1831.0px;top:435.7px;height:14px;line-height:14px;font-size:11px;color:#111;letter-spacing:-0.1px;text-decoration:underline;">unit</div>
<div style="left:1841.0px;top:420.0px;height:13px;line-height:13px;font-size:10.3px;color:#fff;width:160px;text-align:center;letter-spacing:-0.35px;">LengthIntLint-s</div>
<div style="left:1898.0px;top:435.7px;height:14px;line-height:14px;font-size:11px;color:#111;letter-spacing:-0.1px;text-decoration:underline;">0,00</div>
<div style="left:1926.0px;top:435.7px;height:14px;line-height:14px;font-size:11px;color:#111;letter-spacing:-0.1px;text-decoration:underline;">ft</div>
<div style="left:1945.0px;top:420.0px;height:13px;line-height:13px;font-size:10.3px;color:#fff;width:160px;text-align:center;letter-spacing:-0.35px;">IntDoorMoldgLength-s</div>
<div style="left:2002.0px;top:435.7px;height:14px;line-height:14px;font-size:11px;color:#111;letter-spacing:-0.1px;text-decoration:underline;">0,00</div>
<div style="left:2030.0px;top:435.7px;height:14px;line-height:14px;font-size:11px;color:#111;letter-spacing:-0.1px;text-decoration:underline;">ft</div>
<div style="left:2069.0px;top:420.0px;height:13px;line-height:13px;font-size:10.3px;color:#fff;width:160px;text-align:center;letter-spacing:-0.35px;">PortIntNbt</div>
<div style="left:2126.0px;top:435.7px;height:14px;line-height:14px;font-size:11px;color:#111;letter-spacing:-0.1px;text-decoration:underline;">0,00</div>
<div style="left:2154.0px;top:435.7px;height:14px;line-height:14px;font-size:11px;color:#111;letter-spacing:-0.1px;text-decoration:underline;">unit</div>
<div style="left:516px;top:454px;width:1774px;height:35px;background:#366a8f;"></div>
<div style="left:516px;top:489px;width:1774px;height:1px;background:#e8eef3;"></div>
<div style="left:1449px;top:454px;width:1px;height:36px;background:#6a6a6a;"></div>
<div style="left:658px;top:470px;width:25px;height:19px;background:#f2c500;"></div>
<div style="left:655.5px;top:472.0px;height:15px;line-height:15px;font-size:11.5px;color:#111;width:30px;text-align:center;">0</div>
<div style="left:753px;top:470.7px;height:16px;line-height:16px;font-size:12px;color:#fff;font-weight:bold;letter-spacing:-0.05px;">08 Interior Doors and Frames Building</div>
<div style="left:537px;top:461px;width:8px;height:1px;background:#111;"></div>
<div style="left:537px;top:479px;width:8px;height:1px;background:#111;"></div>
<svg style="left:545px;top:475px;" width="9" height="9" viewBox="0 0 9 9"><rect x="0.5" y="0.5" width="8" height="8" fill="#f4f4f4" stroke="#8a8a8a" stroke-width="1"/><path d="M2,4.5 L7,4.5" stroke="#2b3a8a" stroke-width="1.2"/><path d="M4.5,2 L4.5,7" stroke="#2b3a8a" stroke-width="1.2"/></svg>
<svg style="left:1428px;top:472px;" width="14" height="16" viewBox="0 0 14 16"><rect x="3" y="0" width="8" height="8" fill="#0e1f2b"/><path d="M7,1.3 L7,6.5 M4.4,3.9 L9.6,3.9" stroke="#fff" stroke-width="1.3"/><path d="M0.5,7.5 L13.5,7.5 L7,14.5 Z" fill="#0e1f2b"/></svg>
<div style="left:1451px;top:470px;width:636px;height:19px;background:#fbf5e3;"></div>
<div style="left:1429.5px;top:456.0px;height:13px;line-height:13px;font-size:10.3px;color:#fff;width:160px;text-align:center;letter-spacing:-0.35px;">LegLength-s</div>
<div style="left:1486.5px;top:471.7px;height:14px;line-height:14px;font-size:11px;color:#111;letter-spacing:-0.1px;text-decoration:underline;">0,00</div>
<div style="left:1514.5px;top:471.7px;height:14px;line-height:14px;font-size:11px;color:#111;letter-spacing:-0.1px;text-decoration:underline;">ft</div>
<div style="left:1546.0px;top:456.0px;height:13px;line-height:13px;font-size:10.3px;color:#fff;width:160px;text-align:center;letter-spacing:-0.35px;">TreshLength-s</div>
<div style="left:1603.0px;top:471.7px;height:14px;line-height:14px;font-size:11px;color:#111;letter-spacing:-0.1px;text-decoration:underline;">0,00</div>
<div style="left:1631.0px;top:471.7px;height:14px;line-height:14px;font-size:11px;color:#111;letter-spacing:-0.1px;text-decoration:underline;">ft</div>
<div style="left:1648.0px;top:456.0px;height:13px;line-height:13px;font-size:10.3px;color:#fff;width:160px;text-align:center;letter-spacing:-0.35px;">IntDoorSurf-s</div>
<div style="left:1705.0px;top:471.7px;height:14px;line-height:14px;font-size:11px;color:#111;letter-spacing:-0.1px;text-decoration:underline;">0,00</div>
<div style="left:1733.0px;top:471.7px;height:14px;line-height:14px;font-size:11px;color:#111;letter-spacing:-0.1px;text-decoration:underline;">ft2</div>
<div style="left:1746.0px;top:456.0px;height:13px;line-height:13px;font-size:10.3px;color:#fff;width:160px;text-align:center;letter-spacing:-0.35px;">NbIntLint-s</div>
<div style="left:1803.0px;top:471.7px;height:14px;line-height:14px;font-size:11px;color:#111;letter-spacing:-0.1px;text-decoration:underline;">0,00</div>
<div style="left:1831.0px;top:471.7px;height:14px;line-height:14px;font-size:11px;color:#111;letter-spacing:-0.1px;text-decoration:underline;">unit</div>
<div style="left:1841.0px;top:456.0px;height:13px;line-height:13px;font-size:10.3px;color:#fff;width:160px;text-align:center;letter-spacing:-0.35px;">LengthIntLint-s</div>
<div style="left:1898.0px;top:471.7px;height:14px;line-height:14px;font-size:11px;color:#111;letter-spacing:-0.1px;text-decoration:underline;">0,00</div>
<div style="left:1926.0px;top:471.7px;height:14px;line-height:14px;font-size:11px;color:#111;letter-spacing:-0.1px;text-decoration:underline;">ft</div>
<div style="left:1945.0px;top:456.0px;height:13px;line-height:13px;font-size:10.3px;color:#fff;width:160px;text-align:center;letter-spacing:-0.35px;">IntDoorMoldgLength-s</div>
<div style="left:2002.0px;top:471.7px;height:14px;line-height:14px;font-size:11px;color:#111;letter-spacing:-0.1px;text-decoration:underline;">0,00</div>
<div style="left:2030.0px;top:471.7px;height:14px;line-height:14px;font-size:11px;color:#111;letter-spacing:-0.1px;text-decoration:underline;">ft</div>
<div style="left:516px;top:490px;width:1774px;height:35px;background:#366a8f;"></div>
<div style="left:516px;top:525px;width:1774px;height:1px;background:#e8eef3;"></div>
<div style="left:1449px;top:490px;width:1px;height:36px;background:#6a6a6a;"></div>
<div style="left:658px;top:506px;width:25px;height:19px;background:#f2c500;"></div>
<div style="left:655.5px;top:508.0px;height:15px;line-height:15px;font-size:11.5px;color:#111;width:30px;text-align:center;">0</div>
<div style="left:753px;top:506.7px;height:16px;line-height:16px;font-size:12px;color:#fff;font-weight:bold;letter-spacing:-0.05px;">08 Exterior Doors and Windows</div>
<div style="left:537px;top:497px;width:8px;height:1px;background:#111;"></div>
<div style="left:537px;top:515px;width:8px;height:1px;background:#111;"></div>
<svg style="left:545px;top:511px;" width="9" height="9" viewBox="0 0 9 9"><rect x="0.5" y="0.5" width="8" height="8" fill="#f4f4f4" stroke="#8a8a8a" stroke-width="1"/><path d="M2,4.5 L7,4.5" stroke="#2b3a8a" stroke-width="1.2"/><path d="M4.5,2 L4.5,7" stroke="#2b3a8a" stroke-width="1.2"/></svg>
<svg style="left:1428px;top:508px;" width="14" height="16" viewBox="0 0 14 16"><rect x="3" y="0" width="8" height="8" fill="#0e1f2b"/><path d="M7,1.3 L7,6.5 M4.4,3.9 L9.6,3.9" stroke="#fff" stroke-width="1.3"/><path d="M0.5,7.5 L13.5,7.5 L7,14.5 Z" fill="#0e1f2b"/></svg>
<div style="left:1451px;top:506px;width:839px;height:19px;background:#fbf5e3;"></div>
<div style="left:1429.5px;top:492.0px;height:13px;line-height:13px;font-size:10.3px;color:#fff;width:160px;text-align:center;letter-spacing:-0.35px;">LegLength-s</div>
<div style="left:1486.5px;top:507.7px;height:14px;line-height:14px;font-size:11px;color:#111;letter-spacing:-0.1px;text-decoration:underline;">0,00</div>
<div style="left:1514.5px;top:507.7px;height:14px;line-height:14px;font-size:11px;color:#111;letter-spacing:-0.1px;text-decoration:underline;">ft</div>
<div style="left:1546.0px;top:492.0px;height:13px;line-height:13px;font-size:10.3px;color:#fff;width:160px;text-align:center;letter-spacing:-0.35px;">TreshLength-s</div>
<div style="left:1603.0px;top:507.7px;height:14px;line-height:14px;font-size:11px;color:#111;letter-spacing:-0.1px;text-decoration:underline;">0,00</div>
<div style="left:1631.0px;top:507.7px;height:14px;line-height:14px;font-size:11px;color:#111;letter-spacing:-0.1px;text-decoration:underline;">ft</div>
<div style="left:1648.0px;top:492.0px;height:13px;line-height:13px;font-size:10.3px;color:#fff;width:160px;text-align:center;letter-spacing:-0.35px;">IntDoorSurf-s</div>
<div style="left:1705.0px;top:507.7px;height:14px;line-height:14px;font-size:11px;color:#111;letter-spacing:-0.1px;text-decoration:underline;">0,00</div>
<div style="left:1733.0px;top:507.7px;height:14px;line-height:14px;font-size:11px;color:#111;letter-spacing:-0.1px;text-decoration:underline;">ft2</div>
<div style="left:1746.0px;top:492.0px;height:13px;line-height:13px;font-size:10.3px;color:#fff;width:160px;text-align:center;letter-spacing:-0.35px;">ExtWallOpenSurf-s</div>
<div style="left:1803.0px;top:507.7px;height:14px;line-height:14px;font-size:11px;color:#111;letter-spacing:-0.1px;text-decoration:underline;">0,00</div>
<div style="left:1831.0px;top:507.7px;height:14px;line-height:14px;font-size:11px;color:#111;letter-spacing:-0.1px;text-decoration:underline;">ft2</div>
<div style="left:1841.0px;top:492.0px;height:13px;line-height:13px;font-size:10.3px;color:#fff;width:160px;text-align:center;letter-spacing:-0.35px;">NbLint-s</div>
<div style="left:1898.0px;top:507.7px;height:14px;line-height:14px;font-size:11px;color:#111;letter-spacing:-0.1px;text-decoration:underline;">0,00</div>
<div style="left:1926.0px;top:507.7px;height:14px;line-height:14px;font-size:11px;color:#111;letter-spacing:-0.1px;text-decoration:underline;">unit</div>
<div style="left:1945.0px;top:492.0px;height:13px;line-height:13px;font-size:10.3px;color:#fff;width:160px;text-align:center;letter-spacing:-0.35px;">LintLength-s</div>
<div style="left:2002.0px;top:507.7px;height:14px;line-height:14px;font-size:11px;color:#111;letter-spacing:-0.1px;text-decoration:underline;">0,00</div>
<div style="left:2030.0px;top:507.7px;height:14px;line-height:14px;font-size:11px;color:#111;letter-spacing:-0.1px;text-decoration:underline;">ft</div>
<div style="left:2069.0px;top:492.0px;height:13px;line-height:13px;font-size:10.3px;color:#fff;width:160px;text-align:center;letter-spacing:-0.35px;">ExtDoorMoldgLength-s</div>
<div style="left:2126.0px;top:507.7px;height:14px;line-height:14px;font-size:11px;color:#111;letter-spacing:-0.1px;text-decoration:underline;">0,00</div>
<div style="left:2154.0px;top:507.7px;height:14px;line-height:14px;font-size:11px;color:#111;letter-spacing:-0.1px;text-decoration:underline;">ft</div>
<div style="left:2182.0px;top:492.0px;height:13px;line-height:13px;font-size:10.3px;color:#fff;width:160px;text-align:center;letter-spacing:-0.35px;">WindPerim-s</div>
<div style="left:2239.0px;top:507.7px;height:14px;line-height:14px;font-size:11px;color:#111;letter-spacing:-0.1px;text-decoration:underline;">0,00</div>
<div style="left:2267.0px;top:507.7px;height:14px;line-height:14px;font-size:11px;color:#111;letter-spacing:-0.1px;text-decoration:underline;">ft</div>
<div style="left:516px;top:526px;width:1774px;height:35px;background:#366a8f;"></div>
<div style="left:516px;top:561px;width:1774px;height:1px;background:#e8eef3;"></div>
<div style="left:1449px;top:526px;width:1px;height:36px;background:#6a6a6a;"></div>
<div style="left:658px;top:542px;width:25px;height:19px;background:#f2c500;"></div>
<div style="left:655.5px;top:544.0px;height:15px;line-height:15px;font-size:11.5px;color:#111;width:30px;text-align:center;">0</div>
<div style="left:753px;top:542.7px;height:16px;line-height:16px;font-size:12px;color:#fff;font-weight:bold;letter-spacing:-0.05px;">09 Ceilings</div>
<div style="left:537px;top:533px;width:8px;height:1px;background:#111;"></div>
<div style="left:537px;top:551px;width:8px;height:1px;background:#111;"></div>
<svg style="left:545px;top:547px;" width="9" height="9" viewBox="0 0 9 9"><rect x="0.5" y="0.5" width="8" height="8" fill="#f4f4f4" stroke="#8a8a8a" stroke-width="1"/><path d="M2,4.5 L7,4.5" stroke="#2b3a8a" stroke-width="1.2"/><path d="M4.5,2 L4.5,7" stroke="#2b3a8a" stroke-width="1.2"/></svg>
<svg style="left:1428px;top:544px;" width="14" height="16" viewBox="0 0 14 16"><rect x="3" y="0" width="8" height="8" fill="#0e1f2b"/><path d="M7,1.3 L7,6.5 M4.4,3.9 L9.6,3.9" stroke="#fff" stroke-width="1.3"/><path d="M0.5,7.5 L13.5,7.5 L7,14.5 Z" fill="#0e1f2b"/></svg>
<div style="left:1451px;top:542px;width:322px;height:19px;background:#fbf5e3;"></div>
<div style="left:1429.5px;top:528.0px;height:13px;line-height:13px;font-size:10.3px;color:#fff;width:160px;text-align:center;letter-spacing:-0.35px;">SurfPrimeJoints-s</div>
<div style="left:1486.5px;top:543.7px;height:14px;line-height:14px;font-size:11px;color:#111;letter-spacing:-0.1px;text-decoration:underline;">0,00</div>
<div style="left:1514.5px;top:543.7px;height:14px;line-height:14px;font-size:11px;color:#111;letter-spacing:-0.1px;text-decoration:underline;">ft2</div>
<div style="left:1546.0px;top:528.0px;height:13px;line-height:13px;font-size:10.3px;color:#fff;width:160px;text-align:center;letter-spacing:-0.35px;">SurfPrimCeil-s</div>
<div style="left:1603.0px;top:543.7px;height:14px;line-height:14px;font-size:11px;color:#111;letter-spacing:-0.1px;text-decoration:underline;">0,00</div>
<div style="left:1631.0px;top:543.7px;height:14px;line-height:14px;font-size:11px;color:#111;letter-spacing:-0.1px;text-decoration:underline;">ft2</div>
<div style="left:1648.0px;top:528.0px;height:13px;line-height:13px;font-size:10.3px;color:#fff;width:160px;text-align:center;letter-spacing:-0.35px;">SurfPaintCeil-s</div>
<div style="left:1705.0px;top:543.7px;height:14px;line-height:14px;font-size:11px;color:#111;letter-spacing:-0.1px;text-decoration:underline;">0,00</div>
<div style="left:1733.0px;top:543.7px;height:14px;line-height:14px;font-size:11px;color:#111;letter-spacing:-0.1px;text-decoration:underline;">ft2</div>
<div style="left:516px;top:562px;width:1774px;height:35px;background:#366a8f;"></div>
<div style="left:516px;top:597px;width:1774px;height:1px;background:#e8eef3;"></div>
<div style="left:1449px;top:562px;width:1px;height:36px;background:#6a6a6a;"></div>
<div style="left:658px;top:578px;width:25px;height:19px;background:#f2c500;"></div>
<div style="left:655.5px;top:580.0px;height:15px;line-height:15px;font-size:11.5px;color:#111;width:30px;text-align:center;">0</div>
<div style="left:753px;top:578.7px;height:16px;line-height:16px;font-size:12px;color:#fff;font-weight:bold;letter-spacing:-0.05px;">09 Plaster &amp; Paint</div>
<div style="left:537px;top:569px;width:8px;height:1px;background:#111;"></div>
<div style="left:537px;top:587px;width:8px;height:1px;background:#111;"></div>
<svg style="left:545px;top:583px;" width="9" height="9" viewBox="0 0 9 9"><rect x="0.5" y="0.5" width="8" height="8" fill="#f4f4f4" stroke="#8a8a8a" stroke-width="1"/><path d="M2,4.5 L7,4.5" stroke="#2b3a8a" stroke-width="1.2"/><path d="M4.5,2 L4.5,7" stroke="#2b3a8a" stroke-width="1.2"/></svg>
<svg style="left:1428px;top:580px;" width="14" height="16" viewBox="0 0 14 16"><rect x="3" y="0" width="8" height="8" fill="#0e1f2b"/><path d="M7,1.3 L7,6.5 M4.4,3.9 L9.6,3.9" stroke="#fff" stroke-width="1.3"/><path d="M0.5,7.5 L13.5,7.5 L7,14.5 Z" fill="#0e1f2b"/></svg>
<div style="left:1451px;top:578px;width:760px;height:19px;background:#fbf5e3;"></div>
<div style="left:1429.5px;top:564.0px;height:13px;line-height:13px;font-size:10.3px;color:#fff;width:160px;text-align:center;letter-spacing:-0.35px;">SurfJointWall</div>
<div style="left:1486.5px;top:579.7px;height:14px;line-height:14px;font-size:11px;color:#111;letter-spacing:-0.1px;text-decoration:underline;">0,00</div>
<div style="left:1514.5px;top:579.7px;height:14px;line-height:14px;font-size:11px;color:#111;letter-spacing:-0.1px;text-decoration:underline;">ft2</div>
<div style="left:1546.0px;top:564.0px;height:13px;line-height:13px;font-size:10.3px;color:#fff;width:160px;text-align:center;letter-spacing:-0.35px;">SurfPrimWall</div>
<div style="left:1603.0px;top:579.7px;height:14px;line-height:14px;font-size:11px;color:#111;letter-spacing:-0.1px;text-decoration:underline;">0,00</div>
<div style="left:1631.0px;top:579.7px;height:14px;line-height:14px;font-size:11px;color:#111;letter-spacing:-0.1px;text-decoration:underline;">ft2</div>
<div style="left:1648.0px;top:564.0px;height:13px;line-height:13px;font-size:10.3px;color:#fff;width:160px;text-align:center;letter-spacing:-0.35px;">SurfPaintWall</div>
<div style="left:1705.0px;top:579.7px;height:14px;line-height:14px;font-size:11px;color:#111;letter-spacing:-0.1px;text-decoration:underline;">0,00</div>
<div style="left:1733.0px;top:579.7px;height:14px;line-height:14px;font-size:11px;color:#111;letter-spacing:-0.1px;text-decoration:underline;">ft2</div>
<div style="left:1746.0px;top:564.0px;height:13px;line-height:13px;font-size:10.3px;color:#fff;width:160px;text-align:center;letter-spacing:-0.35px;">SurfPrimJoints</div>
<div style="left:1803.0px;top:579.7px;height:14px;line-height:14px;font-size:11px;color:#111;letter-spacing:-0.1px;text-decoration:underline;">0,00</div>
<div style="left:1831.0px;top:579.7px;height:14px;line-height:14px;font-size:11px;color:#111;letter-spacing:-0.1px;text-decoration:underline;">ft2</div>
<div style="left:1841.0px;top:564.0px;height:13px;line-height:13px;font-size:10.3px;color:#fff;width:160px;text-align:center;letter-spacing:-0.35px;">SurfPrimCeil</div>
<div style="left:1898.0px;top:579.7px;height:14px;line-height:14px;font-size:11px;color:#111;letter-spacing:-0.1px;text-decoration:underline;">0,00</div>
<div style="left:1926.0px;top:579.7px;height:14px;line-height:14px;font-size:11px;color:#111;letter-spacing:-0.1px;text-decoration:underline;">ft2</div>
<div style="left:1945.0px;top:564.0px;height:13px;line-height:13px;font-size:10.3px;color:#fff;width:160px;text-align:center;letter-spacing:-0.35px;">SurfPaintCeil</div>
<div style="left:2002.0px;top:579.7px;height:14px;line-height:14px;font-size:11px;color:#111;letter-spacing:-0.1px;text-decoration:underline;">0,00</div>
<div style="left:2030.0px;top:579.7px;height:14px;line-height:14px;font-size:11px;color:#111;letter-spacing:-0.1px;text-decoration:underline;">ft2</div>
<div style="left:2069.0px;top:564.0px;height:13px;line-height:13px;font-size:10.3px;color:#fff;width:160px;text-align:center;letter-spacing:-0.35px;">IntDoorSurf</div>
<div style="left:2126.0px;top:579.7px;height:14px;line-height:14px;font-size:11px;color:#111;letter-spacing:-0.1px;text-decoration:underline;">0,00</div>
<div style="left:2154.0px;top:579.7px;height:14px;line-height:14px;font-size:11px;color:#111;letter-spacing:-0.1px;text-decoration:underline;">ft2</div>
<div style="left:516px;top:598px;width:1774px;height:35px;background:#366a8f;"></div>
<div style="left:516px;top:633px;width:1774px;height:1px;background:#e8eef3;"></div>
<div style="left:1449px;top:598px;width:1px;height:36px;background:#6a6a6a;"></div>
<div style="left:658px;top:614px;width:25px;height:19px;background:#f2c500;"></div>
<div style="left:655.5px;top:616.0px;height:15px;line-height:15px;font-size:11.5px;color:#111;width:30px;text-align:center;">0</div>
<div style="left:753px;top:614.7px;height:16px;line-height:16px;font-size:12px;color:#fff;font-weight:bold;letter-spacing:-0.05px;">09 Floor Covering</div>
<div style="left:537px;top:605px;width:8px;height:1px;background:#111;"></div>
<div style="left:537px;top:623px;width:8px;height:1px;background:#111;"></div>
<svg style="left:545px;top:619px;" width="9" height="9" viewBox="0 0 9 9"><rect x="0.5" y="0.5" width="8" height="8" fill="#f4f4f4" stroke="#8a8a8a" stroke-width="1"/><path d="M2,4.5 L7,4.5" stroke="#2b3a8a" stroke-width="1.2"/></svg>
<svg style="left:1428px;top:616px;" width="14" height="16" viewBox="0 0 14 16"><rect x="3" y="0" width="8" height="8" fill="#0e1f2b"/><path d="M7,1.3 L7,6.5 M4.4,3.9 L9.6,3.9" stroke="#fff" stroke-width="1.3"/><path d="M0.5,7.5 L13.5,7.5 L7,14.5 Z" fill="#0e1f2b"/></svg>
<div style="left:1451px;top:614px;width:118px;height:19px;background:#fbf5e3;"></div>
<div style="left:1429.5px;top:600.0px;height:13px;line-height:13px;font-size:10.3px;color:#fff;width:160px;text-align:center;letter-spacing:-0.35px;">FloorPerim-s</div>
<div style="left:1486.5px;top:615.7px;height:14px;line-height:14px;font-size:11px;color:#111;letter-spacing:-0.1px;text-decoration:underline;">0,00</div>
<div style="left:1514.5px;top:615.7px;height:14px;line-height:14px;font-size:11px;color:#111;letter-spacing:-0.1px;text-decoration:underline;">ft</div>
<div style="left:516px;top:770px;width:1774px;height:19px;background:#366a8f;"></div>
<div style="left:516px;top:789px;width:1774px;height:1px;background:#e8eef3;"></div>
<div style="left:1449px;top:770px;width:1px;height:20px;background:#6a6a6a;"></div>
<div style="left:753px;top:770.7px;height:16px;line-height:16px;font-size:12px;color:#fff;font-weight:bold;letter-spacing:-0.05px;">10 Specialities and Accessories</div>
<div style="left:537px;top:779px;width:8px;height:1px;background:#111;"></div>
<svg style="left:545px;top:775px;" width="9" height="9" viewBox="0 0 9 9"><rect x="0.5" y="0.5" width="8" height="8" fill="#f4f4f4" stroke="#8a8a8a" stroke-width="1"/><path d="M2,4.5 L7,4.5" stroke="#2b3a8a" stroke-width="1.2"/><path d="M4.5,2 L4.5,7" stroke="#2b3a8a" stroke-width="1.2"/></svg>
<svg style="left:1428px;top:772px;" width="14" height="16" viewBox="0 0 14 16"><rect x="3" y="0" width="8" height="8" fill="#0e1f2b"/><path d="M7,1.3 L7,6.5 M4.4,3.9 L9.6,3.9" stroke="#fff" stroke-width="1.3"/><path d="M0.5,7.5 L13.5,7.5 L7,14.5 Z" fill="#0e1f2b"/></svg>
<div style="left:516px;top:790px;width:1774px;height:19px;background:#366a8f;"></div>
<div style="left:516px;top:809px;width:1774px;height:1px;background:#e8eef3;"></div>
<div style="left:1449px;top:790px;width:1px;height:20px;background:#6a6a6a;"></div>
<div style="left:753px;top:790.7px;height:16px;line-height:16px;font-size:12px;color:#fff;font-weight:bold;letter-spacing:-0.05px;">11 Integrated Equipment Accessories</div>
<div style="left:537px;top:799px;width:8px;height:1px;background:#111;"></div>
<svg style="left:545px;top:795px;" width="9" height="9" viewBox="0 0 9 9"><rect x="0.5" y="0.5" width="8" height="8" fill="#f4f4f4" stroke="#8a8a8a" stroke-width="1"/><path d="M2,4.5 L7,4.5" stroke="#2b3a8a" stroke-width="1.2"/><path d="M4.5,2 L4.5,7" stroke="#2b3a8a" stroke-width="1.2"/></svg>
<svg style="left:1428px;top:792px;" width="14" height="16" viewBox="0 0 14 16"><rect x="3" y="0" width="8" height="8" fill="#0e1f2b"/><path d="M7,1.3 L7,6.5 M4.4,3.9 L9.6,3.9" stroke="#fff" stroke-width="1.3"/><path d="M0.5,7.5 L13.5,7.5 L7,14.5 Z" fill="#0e1f2b"/></svg>
<div style="left:516px;top:810px;width:1774px;height:19px;background:#366a8f;"></div>
<div style="left:516px;top:829px;width:1774px;height:1px;background:#e8eef3;"></div>
<div style="left:1449px;top:810px;width:1px;height:20px;background:#6a6a6a;"></div>
<div style="left:753px;top:810.7px;height:16px;line-height:16px;font-size:12px;color:#fff;font-weight:bold;letter-spacing:-0.05px;">12 Central Vacuum</div>
<div style="left:537px;top:819px;width:8px;height:1px;background:#111;"></div>
<svg style="left:545px;top:815px;" width="9" height="9" viewBox="0 0 9 9"><rect x="0.5" y="0.5" width="8" height="8" fill="#f4f4f4" stroke="#8a8a8a" stroke-width="1"/><path d="M2,4.5 L7,4.5" stroke="#2b3a8a" stroke-width="1.2"/><path d="M4.5,2 L4.5,7" stroke="#2b3a8a" stroke-width="1.2"/></svg>
<svg style="left:1428px;top:812px;" width="14" height="16" viewBox="0 0 14 16"><rect x="3" y="0" width="8" height="8" fill="#0e1f2b"/><path d="M7,1.3 L7,6.5 M4.4,3.9 L9.6,3.9" stroke="#fff" stroke-width="1.3"/><path d="M0.5,7.5 L13.5,7.5 L7,14.5 Z" fill="#0e1f2b"/></svg>
<div style="left:516px;top:830px;width:1774px;height:19px;background:#366a8f;"></div>
<div style="left:516px;top:849px;width:1774px;height:1px;background:#e8eef3;"></div>
<div style="left:1449px;top:830px;width:1px;height:20px;background:#6a6a6a;"></div>
<div style="left:753px;top:830.7px;height:16px;line-height:16px;font-size:12px;color:#fff;font-weight:bold;letter-spacing:-0.05px;">13 Special Construction</div>
<div style="left:537px;top:839px;width:8px;height:1px;background:#111;"></div>
<svg style="left:545px;top:835px;" width="9" height="9" viewBox="0 0 9 9"><rect x="0.5" y="0.5" width="8" height="8" fill="#f4f4f4" stroke="#8a8a8a" stroke-width="1"/><path d="M2,4.5 L7,4.5" stroke="#2b3a8a" stroke-width="1.2"/><path d="M4.5,2 L4.5,7" stroke="#2b3a8a" stroke-width="1.2"/></svg>
<svg style="left:1428px;top:832px;" width="14" height="16" viewBox="0 0 14 16"><rect x="3" y="0" width="8" height="8" fill="#0e1f2b"/><path d="M7,1.3 L7,6.5 M4.4,3.9 L9.6,3.9" stroke="#fff" stroke-width="1.3"/><path d="M0.5,7.5 L13.5,7.5 L7,14.5 Z" fill="#0e1f2b"/></svg>
<div style="left:516px;top:850px;width:1774px;height:19px;background:#366a8f;"></div>
<div style="left:516px;top:869px;width:1774px;height:1px;background:#e8eef3;"></div>
<div style="left:1449px;top:850px;width:1px;height:20px;background:#6a6a6a;"></div>
<div style="left:753px;top:850.7px;height:16px;line-height:16px;font-size:12px;color:#fff;font-weight:bold;letter-spacing:-0.05px;">15.1 Plumbing</div>
<div style="left:537px;top:859px;width:8px;height:1px;background:#111;"></div>
<svg style="left:545px;top:855px;" width="9" height="9" viewBox="0 0 9 9"><rect x="0.5" y="0.5" width="8" height="8" fill="#f4f4f4" stroke="#8a8a8a" stroke-width="1"/><path d="M2,4.5 L7,4.5" stroke="#2b3a8a" stroke-width="1.2"/><path d="M4.5,2 L4.5,7" stroke="#2b3a8a" stroke-width="1.2"/></svg>
<svg style="left:1428px;top:852px;" width="14" height="16" viewBox="0 0 14 16"><rect x="3" y="0" width="8" height="8" fill="#0e1f2b"/><path d="M7,1.3 L7,6.5 M4.4,3.9 L9.6,3.9" stroke="#fff" stroke-width="1.3"/><path d="M0.5,7.5 L13.5,7.5 L7,14.5 Z" fill="#0e1f2b"/></svg>
<div style="left:516px;top:870px;width:1774px;height:19px;background:#366a8f;"></div>
<div style="left:516px;top:889px;width:1774px;height:1px;background:#e8eef3;"></div>
<div style="left:1449px;top:870px;width:1px;height:20px;background:#6a6a6a;"></div>
<div style="left:753px;top:870.7px;height:16px;line-height:16px;font-size:12px;color:#fff;font-weight:bold;letter-spacing:-0.05px;">15.2 Heating Ventilation Air-Cond.</div>
<div style="left:537px;top:879px;width:8px;height:1px;background:#111;"></div>
<svg style="left:545px;top:875px;" width="9" height="9" viewBox="0 0 9 9"><rect x="0.5" y="0.5" width="8" height="8" fill="#f4f4f4" stroke="#8a8a8a" stroke-width="1"/><path d="M2,4.5 L7,4.5" stroke="#2b3a8a" stroke-width="1.2"/><path d="M4.5,2 L4.5,7" stroke="#2b3a8a" stroke-width="1.2"/></svg>
<svg style="left:1428px;top:872px;" width="14" height="16" viewBox="0 0 14 16"><rect x="3" y="0" width="8" height="8" fill="#0e1f2b"/><path d="M7,1.3 L7,6.5 M4.4,3.9 L9.6,3.9" stroke="#fff" stroke-width="1.3"/><path d="M0.5,7.5 L13.5,7.5 L7,14.5 Z" fill="#0e1f2b"/></svg>
<div style="left:516px;top:890px;width:1774px;height:19px;background:#366a8f;"></div>
<div style="left:516px;top:909px;width:1774px;height:1px;background:#e8eef3;"></div>
<div style="left:1449px;top:890px;width:1px;height:20px;background:#6a6a6a;"></div>
<div style="left:753px;top:890.7px;height:16px;line-height:16px;font-size:12px;color:#fff;font-weight:bold;letter-spacing:-0.05px;">15.3 Controls Heat. Vent. Air-C.</div>
<div style="left:537px;top:899px;width:8px;height:1px;background:#111;"></div>
<svg style="left:545px;top:895px;" width="9" height="9" viewBox="0 0 9 9"><rect x="0.5" y="0.5" width="8" height="8" fill="#f4f4f4" stroke="#8a8a8a" stroke-width="1"/><path d="M2,4.5 L7,4.5" stroke="#2b3a8a" stroke-width="1.2"/><path d="M4.5,2 L4.5,7" stroke="#2b3a8a" stroke-width="1.2"/></svg>
<svg style="left:1428px;top:892px;" width="14" height="16" viewBox="0 0 14 16"><rect x="3" y="0" width="8" height="8" fill="#0e1f2b"/><path d="M7,1.3 L7,6.5 M4.4,3.9 L9.6,3.9" stroke="#fff" stroke-width="1.3"/><path d="M0.5,7.5 L13.5,7.5 L7,14.5 Z" fill="#0e1f2b"/></svg>
<div style="left:516px;top:910px;width:1774px;height:19px;background:#366a8f;"></div>
<div style="left:516px;top:929px;width:1774px;height:1px;background:#e8eef3;"></div>
<div style="left:1449px;top:910px;width:1px;height:20px;background:#6a6a6a;"></div>
<div style="left:753px;top:910.7px;height:16px;line-height:16px;font-size:12px;color:#fff;font-weight:bold;letter-spacing:-0.05px;">16 Electricity</div>
<div style="left:537px;top:919px;width:8px;height:1px;background:#111;"></div>
<svg style="left:545px;top:915px;" width="9" height="9" viewBox="0 0 9 9"><rect x="0.5" y="0.5" width="8" height="8" fill="#f4f4f4" stroke="#8a8a8a" stroke-width="1"/><path d="M2,4.5 L7,4.5" stroke="#2b3a8a" stroke-width="1.2"/><path d="M4.5,2 L4.5,7" stroke="#2b3a8a" stroke-width="1.2"/></svg>
<svg style="left:1428px;top:912px;" width="14" height="16" viewBox="0 0 14 16"><rect x="3" y="0" width="8" height="8" fill="#0e1f2b"/><path d="M7,1.3 L7,6.5 M4.4,3.9 L9.6,3.9" stroke="#fff" stroke-width="1.3"/><path d="M0.5,7.5 L13.5,7.5 L7,14.5 Z" fill="#0e1f2b"/></svg>
<div style="left:516px;top:930px;width:1774px;height:19px;background:#366a8f;"></div>
<div style="left:516px;top:949px;width:1774px;height:1px;background:#e8eef3;"></div>
<div style="left:1449px;top:930px;width:1px;height:20px;background:#6a6a6a;"></div>
<div style="left:753px;top:930.7px;height:16px;line-height:16px;font-size:12px;color:#fff;font-weight:bold;letter-spacing:-0.05px;">99 Special items</div>
<div style="left:537px;top:939px;width:8px;height:1px;background:#111;"></div>
<svg style="left:545px;top:935px;" width="9" height="9" viewBox="0 0 9 9"><rect x="0.5" y="0.5" width="8" height="8" fill="#f4f4f4" stroke="#8a8a8a" stroke-width="1"/><path d="M2,4.5 L7,4.5" stroke="#2b3a8a" stroke-width="1.2"/><path d="M4.5,2 L4.5,7" stroke="#2b3a8a" stroke-width="1.2"/></svg>
<svg style="left:1428px;top:932px;" width="14" height="16" viewBox="0 0 14 16"><rect x="3" y="0" width="8" height="8" fill="#0e1f2b"/><path d="M7,1.3 L7,6.5 M4.4,3.9 L9.6,3.9" stroke="#fff" stroke-width="1.3"/><path d="M0.5,7.5 L13.5,7.5 L7,14.5 Z" fill="#0e1f2b"/></svg>
<div style="left:516px;top:634px;width:1774px;height:19px;background:#cdcfdb;"></div>
<div style="left:516px;top:634px;width:1774px;height:2px;background:#3a3a3a;"></div>
<div style="left:516px;top:651px;width:1774px;height:2px;background:#111;"></div>
<div style="left:658px;top:636px;width:25px;height:15px;background:#f2c500;"></div>
<div style="left:655.5px;top:636.0px;height:15px;line-height:15px;font-size:11.5px;color:#111;width:30px;text-align:center;">0</div>
<div style="left:751px;top:635px;width:300px;height:18px;border:1px solid #1a6fd0;"></div>
<div style="left:753px;top:636.0px;height:16px;line-height:16px;font-size:12px;color:#111;font-weight:bold;letter-spacing:-0.05px;">Floor Covering</div>
<div style="left:1056px;top:636.5px;height:15px;line-height:15px;font-size:11.5px;color:#111;">Type?|Fin.?</div>
<svg style="left:1428px;top:636px;" width="14" height="16" viewBox="0 0 14 16"><rect x="3" y="0" width="8" height="8" fill="#0e1f2b"/><path d="M7,1.3 L7,6.5 M4.4,3.9 L9.6,3.9" stroke="#fff" stroke-width="1.3"/><path d="M0.5,7.5 L13.5,7.5 L7,14.5 Z" fill="#0e1f2b"/></svg>
<div style="left:516px;top:653px;width:1774px;height:1px;background:#e8e8ee;"></div>
<div style="left:516px;top:654px;width:1774px;height:35px;background:#dcdee6;"></div>
<div style="left:516px;top:689px;width:1774px;height:1px;background:#f0f0f4;"></div>
<div style="left:658px;top:670px;width:57px;height:19px;background:#f2c500;"></div>
<div style="left:655.5px;top:672.0px;height:15px;line-height:15px;font-size:11.5px;color:#111;width:30px;text-align:center;">0</div>
<svg style="left:692px;top:673px;" width="13" height="13" viewBox="0 0 13 13"><rect x="0.5" y="0.5" width="12" height="12" fill="#f4f4f6" stroke="#7a86a8"/><rect x="2" y="2" width="9" height="9" fill="#dfe1e8"/><path d="M3,6.5 L5.8,10 L10,2.5" stroke="#3a56a8" stroke-width="1.8" fill="none"/></svg>
<svg style="left:723px;top:671px;" width="19" height="17" viewBox="0 0 19 17"><path d="M1.5,16.5 L1.5,9 C1.5,4 5,0.8 9,0.8 C12,0.8 14.5,2.5 15.5,5 L17,6.5 L16,8 L16,16.5 Z" fill="#000"/><circle cx="8.6" cy="9.2" r="5.3" fill="#fff"/><text x="8.6" y="13" font-size="10" text-anchor="middle" fill="#111" font-family="Liberation Sans" font-weight="bold">7</text><rect x="15.5" y="14.8" width="3.3" height="1.6" fill="#000"/></svg>
<div style="left:753px;top:672.0px;height:15px;line-height:15px;font-size:11.5px;color:#222;letter-spacing:-0.1px;">09 Hardwood floor covering</div>
<svg style="left:1428px;top:671px;" width="14" height="16" viewBox="0 0 14 16"><rect x="3" y="0" width="8" height="8" fill="#0e1f2b"/><path d="M7,1.3 L7,6.5 M4.4,3.9 L9.6,3.9" stroke="#fff" stroke-width="1.3"/><path d="M0.5,7.5 L13.5,7.5 L7,14.5 Z" fill="#0e1f2b"/></svg>
<div style="left:1451px;top:670px;width:232px;height:19px;background:#fbf5e3;"></div>
<div style="left:1429.5px;top:656.0px;height:13px;line-height:13px;font-size:10.3px;color:#111;width:160px;text-align:center;letter-spacing:-0.35px;">FloorPerim-s</div>
<div style="left:1486.5px;top:671.7px;height:14px;line-height:14px;font-size:11px;color:#111;letter-spacing:-0.1px;text-decoration:underline;">0,00</div>
<div style="left:1514.5px;top:671.7px;height:14px;line-height:14px;font-size:11px;color:#111;letter-spacing:-0.1px;text-decoration:underline;">ft</div>
<div style="left:1546.0px;top:656.0px;height:13px;line-height:13px;font-size:10.3px;color:#111;width:160px;text-align:center;letter-spacing:-0.35px;">HrdWoodFloorSurf-s</div>
<div style="left:1603.0px;top:671.7px;height:14px;line-height:14px;font-size:11px;color:#111;letter-spacing:-0.1px;text-decoration:underline;">0,00</div>
<div style="left:1631.0px;top:671.7px;height:14px;line-height:14px;font-size:11px;color:#111;letter-spacing:-0.1px;text-decoration:underline;">ft2</div>
<div style="left:516px;top:690px;width:1774px;height:19px;background:#dcdee6;"></div>
<div style="left:516px;top:709px;width:1774px;height:1px;background:#f0f0f4;"></div>
<div style="left:658px;top:690px;width:25px;height:19px;background:#f2c500;"></div>
<div style="left:655.5px;top:692.0px;height:15px;line-height:15px;font-size:11.5px;color:#111;width:30px;text-align:center;">0</div>
<div style="left:753px;top:692.0px;height:15px;line-height:15px;font-size:11.5px;color:#222;letter-spacing:-0.1px;">Hardwood flooring (Finish #3)</div>
<svg style="left:1428px;top:691px;" width="14" height="16" viewBox="0 0 14 16"><rect x="3" y="0" width="8" height="8" fill="#0e1f2b"/><path d="M7,1.3 L7,6.5 M4.4,3.9 L9.6,3.9" stroke="#fff" stroke-width="1.3"/><path d="M0.5,7.5 L13.5,7.5 L7,14.5 Z" fill="#0e1f2b"/></svg>
<div style="left:516px;top:710px;width:1774px;height:19px;background:#cdd0db;"></div>
<div style="left:516px;top:729px;width:1774px;height:1px;background:#eceef2;"></div>
<div style="left:658px;top:710px;width:25px;height:19px;background:#f2c500;"></div>
<div style="left:655.5px;top:712.0px;height:15px;line-height:15px;font-size:11.5px;color:#111;width:30px;text-align:center;">0</div>
<div style="left:753px;top:710.9px;height:16px;line-height:16px;font-size:12px;color:#111;font-weight:bold;letter-spacing:-0.05px;">Laminate floor covering</div>
<div style="left:1056px;top:711.5px;height:15px;line-height:15px;font-size:11.5px;color:#111;">Type?|Fin.?</div>
<svg style="left:1428px;top:712px;" width="14" height="16" viewBox="0 0 14 16"><rect x="3" y="0" width="8" height="8" fill="#0e1f2b"/><path d="M7,1.3 L7,6.5 M4.4,3.9 L9.6,3.9" stroke="#fff" stroke-width="1.3"/><path d="M0.5,7.5 L13.5,7.5 L7,14.5 Z" fill="#0e1f2b"/></svg>
<div style="left:516px;top:730px;width:1774px;height:19px;background:#cdd0db;"></div>
<div style="left:516px;top:749px;width:1774px;height:1px;background:#eceef2;"></div>
<div style="left:658px;top:730px;width:25px;height:19px;background:#f2c500;"></div>
<div style="left:655.5px;top:732.0px;height:15px;line-height:15px;font-size:11.5px;color:#111;width:30px;text-align:center;">0</div>
<div style="left:753px;top:730.9px;height:16px;line-height:16px;font-size:12px;color:#111;font-weight:bold;letter-spacing:-0.05px;">Ceramic Floor covering ($/ft2)</div>
<div style="left:1056px;top:731.5px;height:15px;line-height:15px;font-size:11.5px;color:#111;">Type?|Fin.?</div>
<svg style="left:1428px;top:732px;" width="14" height="16" viewBox="0 0 14 16"><rect x="3" y="0" width="8" height="8" fill="#0e1f2b"/><path d="M7,1.3 L7,6.5 M4.4,3.9 L9.6,3.9" stroke="#fff" stroke-width="1.3"/><path d="M0.5,7.5 L13.5,7.5 L7,14.5 Z" fill="#0e1f2b"/></svg>
<div style="left:516px;top:750px;width:1774px;height:19px;background:#cdd0db;"></div>
<div style="left:516px;top:769px;width:1774px;height:1px;background:#eceef2;"></div>
<div style="left:658px;top:750px;width:25px;height:19px;background:#f2c500;"></div>
<div style="left:655.5px;top:752.0px;height:15px;line-height:15px;font-size:11.5px;color:#111;width:30px;text-align:center;">0</div>
<div style="left:753px;top:750.9px;height:16px;line-height:16px;font-size:12px;color:#111;font-weight:bold;letter-spacing:-0.05px;">Wall Ceramic ($/pi2)</div>
<div style="left:1056px;top:751.5px;height:15px;line-height:15px;font-size:11.5px;color:#111;">Type?|Fin.?</div>
<svg style="left:1428px;top:752px;" width="14" height="16" viewBox="0 0 14 16"><rect x="3" y="0" width="8" height="8" fill="#0e1f2b"/><path d="M7,1.3 L7,6.5 M4.4,3.9 L9.6,3.9" stroke="#fff" stroke-width="1.3"/><path d="M0.5,7.5 L13.5,7.5 L7,14.5 Z" fill="#0e1f2b"/></svg>
<div style="left:1449px;top:634px;width:1px;height:136px;background:#6a6a6a;"></div>
<div style="left:549px;top:624px;width:1px;height:0px;"></div>
<div style="left:549px;top:629px;width:1px;height:130px;background:#111;"></div>
<div style="left:549px;top:644px;width:8px;height:1px;background:#111;"></div>
<svg style="left:557px;top:640px;" width="9" height="9" viewBox="0 0 9 9"><rect x="0.5" y="0.5" width="8" height="8" fill="#f7f7f7" stroke="#8a8a8a" stroke-width="1"/><path d="M2,4.5 L7,4.5" stroke="#2b3a8a" stroke-width="1.2"/></svg>
<div style="left:549px;top:719px;width:8px;height:1px;background:#111;"></div>
<svg style="left:557px;top:715px;" width="9" height="9" viewBox="0 0 9 9"><rect x="0.5" y="0.5" width="8" height="8" fill="#f7f7f7" stroke="#8a8a8a" stroke-width="1"/><path d="M2,4.5 L7,4.5" stroke="#2b3a8a" stroke-width="1.2"/><path d="M4.5,2 L4.5,7" stroke="#2b3a8a" stroke-width="1.2"/></svg>
<div style="left:549px;top:739px;width:8px;height:1px;background:#111;"></div>
<svg style="left:557px;top:735px;" width="9" height="9" viewBox="0 0 9 9"><rect x="0.5" y="0.5" width="8" height="8" fill="#f7f7f7" stroke="#8a8a8a" stroke-width="1"/><path d="M2,4.5 L7,4.5" stroke="#2b3a8a" stroke-width="1.2"/><path d="M4.5,2 L4.5,7" stroke="#2b3a8a" stroke-width="1.2"/></svg>
<div style="left:549px;top:759px;width:8px;height:1px;background:#111;"></div>
<svg style="left:557px;top:755px;" width="9" height="9" viewBox="0 0 9 9"><rect x="0.5" y="0.5" width="8" height="8" fill="#f7f7f7" stroke="#8a8a8a" stroke-width="1"/><path d="M2,4.5 L7,4.5" stroke="#2b3a8a" stroke-width="1.2"/><path d="M4.5,2 L4.5,7" stroke="#2b3a8a" stroke-width="1.2"/></svg>
<div style="left:561px;top:649px;width:1px;height:50px;background:#111;"></div>
<div style="left:561px;top:661px;width:8px;height:1px;background:#111;"></div>
<div style="left:561px;top:679px;width:9px;height:1px;background:#111;"></div>
<svg style="left:570px;top:675px;" width="9" height="9" viewBox="0 0 9 9"><rect x="0.5" y="0.5" width="8" height="8" fill="#f7f7f7" stroke="#8a8a8a" stroke-width="1"/><path d="M2,4.5 L7,4.5" stroke="#2b3a8a" stroke-width="1.2"/><path d="M4.5,2 L4.5,7" stroke="#2b3a8a" stroke-width="1.2"/></svg>
<div style="left:561px;top:699px;width:9px;height:1px;background:#111;"></div>
<svg style="left:570px;top:695px;" width="9" height="9" viewBox="0 0 9 9"><rect x="0.5" y="0.5" width="8" height="8" fill="#f7f7f7" stroke="#8a8a8a" stroke-width="1"/><path d="M2,4.5 L7,4.5" stroke="#2b3a8a" stroke-width="1.2"/><path d="M4.5,2 L4.5,7" stroke="#2b3a8a" stroke-width="1.2"/></svg>
<div style="left:536px;top:339px;width:1px;height:601px;background:#111;"></div>
<div style="left:516px;top:950px;width:1774px;height:17px;background:#efefef;"></div>
<div style="left:534px;top:951px;width:1493px;height:15px;background:#cdcdcd;"></div>
<svg style="left:520px;top:954px;" width="9" height="10" viewBox="0 0 9 10"><path d="M6.5,1 L2.5,5 L6.5,9" stroke="#444" stroke-width="2" fill="none"/></svg>
<div style="left:516px;top:967px;width:1774px;height:1px;background:#6a6a6a;"></div>
<div style="left:516px;top:339px;width:1px;height:629px;background:#6a6a6a;"></div>
<div style="left:519px;top:974px;width:1771px;height:17px;border:1px solid #6a6a6a;border-right:none;background:#fff;"></div>
<div style="left:521px;top:975.0px;height:15px;line-height:15px;font-size:11.5px;color:#333;letter-spacing:-0.1px;">Descriptions /Notes</div>
<div style="left:520px;top:998.5px;height:15px;line-height:15px;font-size:11.5px;color:#333;letter-spacing:-0.1px;">Type</div>
<div style="left:520px;top:1019.5px;height:15px;line-height:15px;font-size:11.5px;color:#333;letter-spacing:-0.1px;">Sorting Code</div>
<div style="left:520px;top:1044.5px;height:15px;line-height:15px;font-size:11.5px;color:#333;letter-spacing:-0.1px;">Code</div>
<div style="left:520px;top:1070.5px;height:15px;line-height:15px;font-size:11.5px;color:#333;letter-spacing:-0.1px;">Name</div>
<div style="left:520px;top:1109.5px;height:15px;line-height:15px;font-size:11.5px;color:#333;letter-spacing:-0.1px;">Specification</div>
<div style="left:520px;top:1134.5px;height:15px;line-height:15px;font-size:11.5px;color:#333;letter-spacing:-0.1px;">Identification</div>
<div style="left:520px;top:1161.5px;height:15px;line-height:15px;font-size:11.5px;color:#333;letter-spacing:-0.1px;">Item creator</div>
<div style="left:520px;top:1186.5px;height:15px;line-height:15px;font-size:11.5px;color:#333;letter-spacing:-0.1px;">Status</div>
<div style="left:520px;top:1211.5px;height:15px;line-height:15px;font-size:11.5px;color:#333;letter-spacing:-0.1px;">Classification</div>
<div style="left:607px;top:996px;width:103px;height:19px;border:1px solid #b4b4b4;background:#eeeeee;"></div>
<div style="left:609px;top:998.0px;height:15px;line-height:15px;font-size:11.5px;color:#111;letter-spacing:-0.1px;">Unconstrained</div>
<div style="left:781px;top:994px;width:112px;height:21px;border:1px solid #c4c4c4;background:#efefef;"></div>
<div style="left:783.0px;top:996.5px;height:15px;line-height:15px;font-size:11.5px;color:#222;width:110px;text-align:center;">Catalog item</div>
<div style="left:607px;top:1020px;width:287px;height:19px;border:1px solid #b4b4b4;background:#fff;"></div>
<div style="left:609px;top:1022.0px;height:15px;line-height:15px;font-size:11.5px;color:#111;letter-spacing:-0.1px;">09A1</div>
<div style="left:607px;top:1045px;width:287px;height:19px;border:1px solid #b4b4b4;background:#eeeeee;"></div>
<div style="left:609px;top:1047.0px;height:15px;line-height:15px;font-size:11.5px;color:#111;letter-spacing:-0.1px;">108014</div>
<div style="left:606px;top:1071px;width:268px;height:32px;border:1px solid #b4b4b4;background:#fff;"></div>
<div style="left:608px;top:1072.5px;height:15px;line-height:15px;font-size:11.5px;color:#111;letter-spacing:-0.1px;">Floor Covering</div>
<div style="left:606px;top:1110px;width:224px;height:19px;border:1px solid #b4b4b4;background:#fff;"></div>
<div style="left:835px;top:1109px;width:20px;height:21px;border:1px solid #c4c4c4;background:#f1f1f1;"></div>
<div style="left:835.0px;top:1112.5px;height:15px;line-height:15px;font-size:11.5px;color:#222;width:20px;text-align:center;">...</div>
<div style="left:857px;top:1109px;width:20px;height:21px;border:1px solid #c4c4c4;background:#f1f1f1;"></div>
<div style="left:856.5px;top:1112.0px;height:14px;line-height:14px;font-size:11px;color:#222;width:20px;text-align:center;">X</div>
<div style="left:606px;top:1135px;width:205px;height:19px;border:1px solid #b4b4b4;background:#fff;"></div>
<div style="left:608px;top:1137.0px;height:15px;line-height:15px;font-size:11.5px;color:#111;letter-spacing:-0.1px;">Type?|Fin.?</div>
<div style="left:606px;top:1160px;width:144px;height:19px;border:1px solid #b4b4b4;background:#eeeeee;"></div>
<div style="left:608px;top:1162.0px;height:15px;line-height:15px;font-size:11.5px;color:#111;letter-spacing:-0.1px;">ConstructBuy</div>
<div style="left:758px;top:1159.5px;height:15px;line-height:15px;font-size:11.5px;color:#333;letter-spacing:-0.1px;">Assembly</div>
<div style="left:839px;top:1157px;width:55px;height:20px;overflow:hidden;border:1px solid #b4b4b4;border-right:none;background:#efefef;"><div style="left:1px;top:0;line-height:18px;font-size:11.5px;color:#111;">ConstructBuy</div></div>
<div style="left:606px;top:1186px;width:144px;height:19px;border:1px solid #b4b4b4;background:#eeeeee;"></div>
<div style="left:608px;top:1188.0px;height:15px;line-height:15px;font-size:11.5px;color:#111;letter-spacing:-0.1px;">Verified</div>
<div style="left:606px;top:1210px;width:249px;height:48px;border:1px solid #b4b4b4;background:#fff;"></div>
<div style="left:855px;top:1210px;width:20px;height:20px;border:1px solid #c4c4c4;background:#f1f1f1;"></div>
<div style="left:855.0px;top:1213.5px;height:15px;line-height:15px;font-size:11.5px;color:#222;width:20px;text-align:center;">...</div>
<div style="left:855px;top:1230px;width:20px;height:20px;border:1px solid #c4c4c4;background:#f1f1f1;"></div>
<div style="left:854.5px;top:1233.0px;height:14px;line-height:14px;font-size:11px;color:#222;width:20px;text-align:center;">X</div>
<div style="left:892px;top:993px;width:3px;height:335px;background:#94aed2;"></div>
<div style="left:908px;top:998.5px;height:15px;line-height:15px;font-size:11.5px;color:#333;letter-spacing:-0.1px;">Description</div>
<div style="left:971px;top:995px;width:2px;height:24px;background:#111;"></div>
<div style="left:980px;top:998.5px;height:15px;line-height:15px;font-size:11.5px;color:#222;letter-spacing:-0.1px;">Internal note</div>
<div style="left:1053px;top:997px;width:1px;height:22px;background:#555;"></div>
<div style="left:1062px;top:998.5px;height:15px;line-height:15px;font-size:11.5px;color:#222;letter-spacing:-0.1px;">Images / Attached files</div>
<div style="left:1185px;top:997px;width:1px;height:22px;background:#555;"></div>
<div style="left:1060px;top:1018px;width:1px;height:310px;background:#eeeeee;"></div>
<div style="left:912px;top:1039px;width:12px;height:12px;border:1px solid #8a8a8a;border-top:2px solid #666;border-left:2px solid #666;background:#fff;"></div>
<div style="left:930px;top:1037.5px;height:15px;line-height:15px;font-size:11.5px;color:#333;letter-spacing:-0.1px;">Display</div>
<div style="left:904px;top:1080px;width:149px;height:93px;border:1px solid #a8a8a8;"></div>
<div style="left:912px;top:1076px;width:60px;height:10px;background:#fff;"></div>
<div style="left:914px;top:1073.5px;height:15px;line-height:15px;font-size:11.5px;color:#333;letter-spacing:-0.1px;">Description</div>
<svg style="left:911px;top:1103px;" width="12" height="12" viewBox="0 0 12 12"><circle cx="6" cy="6" r="5" fill="#fff" stroke="#8a8a8a"/><circle cx="6" cy="6" r="2.2" fill="#111"/></svg>
<div style="left:929px;top:1101.5px;height:15px;line-height:15px;font-size:11.5px;color:#333;letter-spacing:-0.1px;">Catalog</div>
<svg style="left:911px;top:1135px;" width="12" height="12" viewBox="0 0 12 12"><circle cx="6" cy="6" r="5" fill="#fff" stroke="#8a8a8a"/></svg>
<div style="left:929px;top:1133.5px;height:15px;line-height:15px;font-size:11.5px;color:#333;letter-spacing:-0.1px;">This place (row)</div>
<div style="left:1065px;top:1034px;width:1230px;height:282px;border:1px solid #a4a4a4;border-right:none;background:#fff;"></div>
<div style="left:893px;top:1327px;width:1397px;height:2px;background:#111;"></div>
<div style="left:516px;top:1328px;width:5px;height:1px;background:#111;"></div>
<div style="left:637px;top:1328px;width:256px;height:1px;background:#111;"></div>
<div style="left:521px;top:1350px;width:117px;height:1px;background:#111;"></div>
<div style="left:637px;top:1328px;width:1px;height:23px;background:#111;"></div>
<div style="left:638px;top:1352px;width:1652px;height:1px;background:#d0d0d0;"></div>
<div style="left:529px;top:1332.5px;height:15px;line-height:15px;font-size:11.5px;color:#333;letter-spacing:-0.1px;">Descriptions /Notes</div>
<div style="left:646px;top:1332.5px;height:15px;line-height:15px;font-size:11.5px;color:#222;letter-spacing:-0.15px;">Settings</div>
<div style="left:694px;top:1331px;width:1px;height:19px;background:#444;"></div>
<div style="left:703px;top:1332.5px;height:15px;line-height:15px;font-size:11.5px;color:#222;letter-spacing:-0.15px;">Cost price</div>
<div style="left:760px;top:1331px;width:1px;height:19px;background:#444;"></div>
<div style="left:769px;top:1332.5px;height:15px;line-height:15px;font-size:11.5px;color:#222;letter-spacing:-0.15px;">Error / Improvements</div>
<div style="left:885px;top:1331px;width:1px;height:19px;background:#444;"></div>
<div style="left:894px;top:1332.5px;height:15px;line-height:15px;font-size:11.5px;color:#222;letter-spacing:-0.15px;">Summary</div>
<div style="left:949px;top:1331px;width:1px;height:19px;background:#444;"></div>
<div style="left:958px;top:1332.5px;height:15px;line-height:15px;font-size:11.5px;color:#222;letter-spacing:-0.15px;">Usage</div>
<div style="left:996px;top:1331px;width:1px;height:19px;background:#444;"></div>
<div style="left:5px;top:1353px;width:2285px;height:50px;background:#efefef;"></div>
<div style="left:5px;top:1354px;width:2285px;height:1px;background:#a0a0a0;"></div>
<div style="left:5px;top:1377px;width:2285px;height:1px;background:#fff;"></div>
<div style="left:8px;top:1355px;width:198px;height:22px;border-left:1px solid #a8a8a8;border-top:1px solid #d8d8d8;"></div>
<div style="left:209px;top:1355px;width:172px;height:22px;border-left:1px solid #a8a8a8;border-top:1px solid #d8d8d8;"></div>
<div style="left:384px;top:1355px;width:1906px;height:22px;border-left:1px solid #a8a8a8;border-top:1px solid #d8d8d8;"></div>
<div style="left:10px;top:1358.5px;height:15px;line-height:15px;font-size:11.5px;color:#111;letter-spacing:-0.3px;">108014</div>
<div style="left:212px;top:1358.5px;height:15px;line-height:15px;font-size:11.5px;color:#111;letter-spacing:-0.3px;">1213 Records</div>
<div style="left:386px;top:1358.5px;height:15px;line-height:15px;font-size:11.5px;color:#111;letter-spacing:-0.25px;">[Type: Unconstrained], [Name: Floor Covering]</div>
<div style="left:11px;top:1385.5px;height:15px;line-height:15px;font-size:11.5px;color:#333;letter-spacing:-0.4px;">BCC Officiel 2022-06-28-non officiel</div>
<div style="left:194px;top:1385.5px;height:15px;line-height:15px;font-size:11.5px;color:#333;letter-spacing:-0.3px;">OFFICIEL</div>
<div style="left:248px;top:1383px;width:1px;height:18px;background:#ccc;"></div>
<div style="left:255px;top:1385.5px;height:15px;line-height:15px;font-size:11.5px;color:#333;letter-spacing:-0.2px;">Alain</div>
<svg style="left:0;top:0" width="2299" height="1412" viewBox="0 0 2299 1412">
<defs>
<filter id="sh" x="-20%" y="-20%" width="140%" height="140%"><feDropShadow dx="1.5" dy="2" stdDeviation="1.6" flood-color="#000" flood-opacity="0.45"/></filter>
<marker id="ah" markerWidth="11" markerHeight="9" refX="9" refY="4.5" orient="auto" markerUnits="userSpaceOnUse"><path d="M0,0 L11,4.5 L0,9 Z" fill="#8a0000"/></marker>
</defs>
<g filter="url(#sh)">
<ellipse cx="243" cy="608.5" rx="231.5" ry="26.5" fill="none" stroke="#8a0000" stroke-width="2.6"/>
<circle cx="484" cy="732" r="17" fill="none" stroke="#8a0000" stroke-width="2.4"/>
<rect x="521" y="631.5" width="931" height="24.5" fill="none" stroke="#8a0000" stroke-width="2.2"/>
<path d="M96,261 L124,284" stroke="#8a0000" stroke-width="1.7" marker-end="url(#ah)"/>
<path d="M94,253 L174,287" stroke="#8a0000" stroke-width="1.7" marker-end="url(#ah)"/>
</g>
<circle cx="494.5" cy="642.5" r="14.4" fill="#8a0000"/>
<circle cx="458.5" cy="705.5" r="14.4" fill="#8a0000"/>
<circle cx="20" cy="579" r="14.4" fill="#8a0000"/>
<circle cx="85" cy="254" r="14.4" fill="#8a0000"/>
</svg>
<div style="left:479.5px;top:632.2px;height:22px;line-height:22px;font-size:17px;color:#fff;width:30px;text-align:center;">1</div>
<div style="left:70.0px;top:243.7px;height:22px;line-height:22px;font-size:17px;color:#fff;width:30px;text-align:center;">2</div>
<div style="left:5.0px;top:568.7px;height:22px;line-height:22px;font-size:17px;color:#fff;width:30px;text-align:center;">3</div>
<div style="left:443.5px;top:695.2px;height:22px;line-height:22px;font-size:17px;color:#fff;width:30px;text-align:center;font-weight:bold;">4</div>
<div style="left:2290px;top:0px;width:9px;height:1412px;background:#000;"></div>
<div style="left:0px;top:1403px;width:2299px;height:9px;background:#000;"></div>
<div style="left:0px;top:0px;width:5px;height:1412px;background:#000;"></div>
<div style="left:0px;top:0px;width:2299px;height:5px;background:#000;"></div></body></html>
